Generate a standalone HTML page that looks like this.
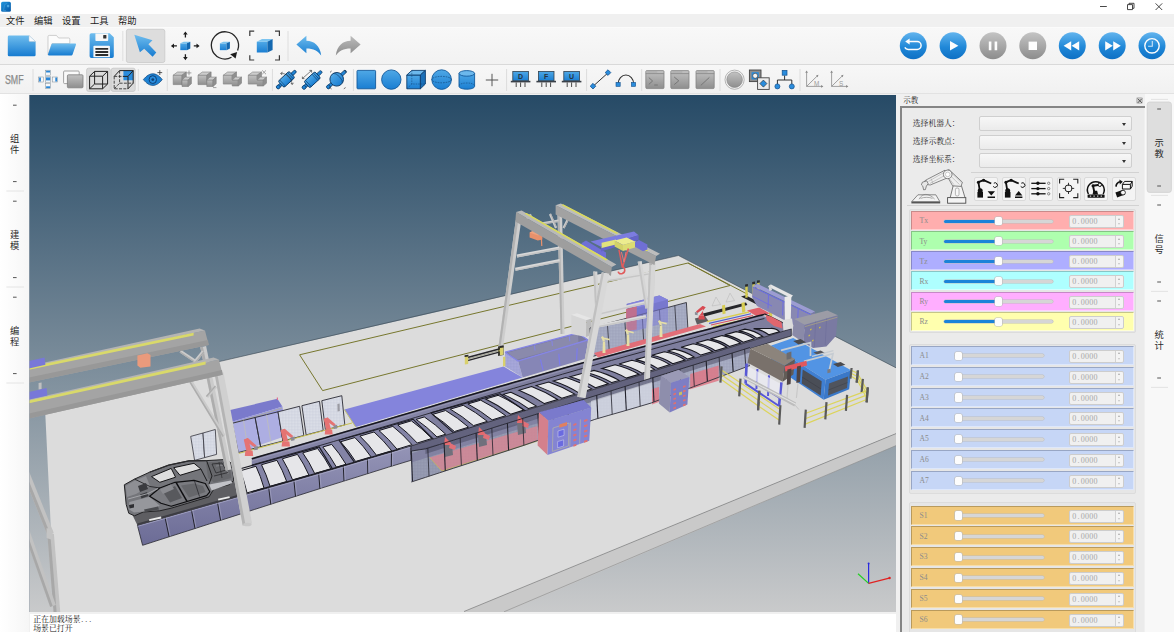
<!DOCTYPE html><html><head><meta charset="utf-8"><title>SMF</title><style>
*{box-sizing:border-box}
html,body{margin:0;padding:0}
body{width:1174px;height:632px;overflow:hidden;background:#f0f0f0;position:relative;font-family:"Liberation Sans",sans-serif;font-size:8px;color:#222}
.abs{position:absolute}
svg{position:absolute;left:0;top:0;overflow:visible}
#titlebar{left:0;top:0;width:1174px;height:14px;background:#fff}
#menubar{left:0;top:14px;width:1174px;height:13px;background:#f0f0f0}
#tb1{left:0;top:27px;width:1174px;height:38px;background:linear-gradient(#f8f8f8,#f2f2f2);border-top:1px solid #fbfbfb;border-bottom:1px solid #d9d9d9}
#tb2{left:0;top:65px;width:1174px;height:29px;background:linear-gradient(#f7f7f7,#f1f1f1);border-bottom:1px solid #e2e2e2}
#leftcol{left:0;top:94px;width:29px;height:538px;background:linear-gradient(90deg,#ffffff,#f6f6f6)}
#rightcol{left:1145px;top:94px;width:29px;height:538px;background:#f8f8f8}
#viewport{left:29px;top:95px;width:867px;height:517px;background:#7b8b98;overflow:hidden}
#log{left:30px;top:614px;width:866px;height:18px;background:#fff}
#panel{left:900px;top:94px;width:244px;height:538px;background:#ebebeb}
.sel{background:#dcdcdc;border:1px solid #c4c4c4;border-radius:2px}
.sep{width:1px;background:#d8d8d8}
.combo{left:979px;width:153px;height:15px;border:1px solid #cfcfcf;border-radius:2px;background:linear-gradient(#f7f7f7,#ebebeb)}
.combo:after{content:"";position:absolute;right:5px;top:6px;border:2px solid transparent;border-top:3px solid #333;border-bottom:0}
.btn{top:177px;width:24px;height:24px;border:1px solid #dadada;border-radius:2px;background:#f4f4f4}
.row{left:911px;width:223px;height:19px;border:1px solid;}
.lab{position:absolute;left:7.4px;top:5.4px;font-family:"Liberation Serif",serif;font-size:7.6px;line-height:8px;color:#8c8c8c;letter-spacing:.1px}
.trk{position:absolute;left:32px;top:7.5px;width:109px;height:3px;border-radius:1.5px;background:#d6d6d6;box-shadow:0 0 0 .5px #bdbdbd}
.fill{position:absolute;left:0;top:0;height:3px;width:54px;border-radius:1.5px;background:#1b83d9}
.knob{position:absolute;top:-2.7px;width:7.4px;height:8.2px;border-radius:1.5px;background:#fdfdfd;box-shadow:0 0 0 .6px #bcbcbc}
.spin{position:absolute;left:157px;top:3px;width:55px;height:13px;border:1px solid #cdcdcd;border-radius:2px;background:#f0f0f0;font-family:"Liberation Serif",serif;font-size:8px;line-height:11px;color:#a6a6a6;padding-left:2.2px;letter-spacing:.2px}
.spin b{font-weight:normal;padding:0 1.1px}
.spin i{position:absolute;right:0;top:0;width:8px;height:11px;border-left:1px solid #d2d2d2;background:#f4f4f4;border-radius:0 2px 2px 0}
.spin i:before{content:"";position:absolute;left:1.6px;top:1.6px;border:1.9px solid transparent;border-top:0;border-bottom:2.4px solid #a9a9a9}
.spin i:after{content:"";position:absolute;left:1.6px;top:7px;border:1.9px solid transparent;border-bottom:0;border-top:2.4px solid #c4c4c4}
.dash{position:absolute;width:4px;height:1px;background:#444}
.tsep{position:absolute;height:1px;background:#e6e6e6}
</style></head><body>
<div id="titlebar" class="abs"></div><div id="menubar" class="abs"></div><div id="tb1" class="abs"></div><div id="tb2" class="abs"></div>
<div id="leftcol" class="abs"></div><div id="rightcol" class="abs"></div>
<div id="viewport" class="abs"><svg width="867" height="517" viewBox="29 95 867 517"><defs><linearGradient id="sky" x1="0" y1="0" x2="0" y2="1"><stop offset="0" stop-color="#264a66"/><stop offset="1" stop-color="#c9cacb"/></linearGradient><linearGradient id="pan" x1="0" y1="0" x2="0" y2="1"><stop offset="0" stop-color="#9494b6"/><stop offset="1" stop-color="#6c6c96"/></linearGradient><linearGradient id="legg" x1="0" y1="0" x2="1" y2="0"><stop offset="0" stop-color="#c2c2c2"/><stop offset=".5" stop-color="#e2e2e2"/><stop offset="1" stop-color="#b0b0b0"/></linearGradient><pattern id="mesh" width="1.5" height="1.5" patternUnits="userSpaceOnUse"><rect width="1.5" height="1.5" fill="#dcdfe8"/><path d="M0 0h1.5M0 0v1.5" stroke="#bcc0d0" stroke-width=".3"/></pattern><pattern id="meshp" width="1.5" height="1.5" patternUnits="userSpaceOnUse"><rect width="1.5" height="1.5" fill="#a9a9dc"/><path d="M0 0h1.5M0 0v1.5" stroke="#8f94c4" stroke-width=".35"/></pattern><pattern id="meshr" width="1.5" height="1.5" patternUnits="userSpaceOnUse"><rect width="1.5" height="1.5" fill="#e29aa4"/><path d="M0 0h1.5M0 0v1.5" stroke="#b98a9c" stroke-width=".35"/></pattern><pattern id="meshd" width="1.5" height="1.5" patternUnits="userSpaceOnUse"><rect width="1.5" height="1.5" fill="#aab0c6"/><path d="M0 0h1.5M0 0v1.5" stroke="#8d93ac" stroke-width=".35"/></pattern></defs><rect x="29" y="94" width="867" height="518" fill="url(#sky)"/><polygon points="44.7,401.9 220.4,361.3 440,311.2 678.4,255.5 896,368 896.5,433.4 464,611.5 464,613 55,613" fill="#dcdcdc"/><polyline points="44.7,401.9 678.4,255.5 897,368.3" fill="none" stroke="#3a4650" stroke-width="0.7" opacity=".8"/><polygon points="896.5,433.4 464,611.5 464,613 504,613 896.5,445.4" fill="#c9c9c9"/><polyline points="896.5,433.4 464,611.5" fill="none" stroke="#6e6e6e" stroke-width="0.6"/><polyline points="896.5,445.4 504,611.8" fill="none" stroke="#8a8a8a" stroke-width="0.6"/><polyline points="299.6,354.8 322.6,390.6 730,285.5 688,263 299.6,354.8" fill="none" stroke="#77772e" stroke-width="1"/><polyline points="688,263 748,294.5" fill="none" stroke="#77772e" stroke-width="1"/><polygon points="557.5,214.1 562.1,213.9 564.6,334 560.6,334" fill="#cdcdcd"/><polygon points="557.5,214.1 559.6,214 562.4,334 560.6,334" fill="#b2b2b2"/><polygon points="649.4,262.9 655.4,263.1 649,398.1 643.4,397.9" fill="#cdcdcd"/><polygon points="649.4,262.9 652.1,263 645.9,398 643.4,397.9" fill="#b2b2b2"/><polygon points="542.4,224.6 542,222.2 558.4,219.6 558.8,222" fill="#cdcdcd"/><polygon points="542.4,224.6 542.2,223.5 558.6,220.9 558.8,222" fill="#b2b2b2"/><polygon points="517.2,257.4 516.6,254.4 559.1,246.5 559.7,249.5" fill="#d8d8d8"/><polygon points="517.2,257.4 516.9,256 559.4,248.1 559.7,249.5" fill="#c4c4c4"/><polygon points="515.6,270.8 515,267.8 559.5,259.1 560.1,262.1" fill="#d8d8d8"/><polygon points="515.6,270.8 515.3,269.4 559.8,260.7 560.1,262.1" fill="#c4c4c4"/><polygon points="521.8,224.8 520.2,223.2 530.2,213.7 531.8,215.3" fill="#cdcdcd"/><polygon points="521.8,224.8 521.1,224.1 531.1,214.6 531.8,215.3" fill="#b2b2b2"/><polygon points="564.5,228.5 562.5,227.5 569.5,213.5 571.5,214.5" fill="#cdcdcd"/><polygon points="564.5,228.5 563.6,228 570.6,214 571.5,214.5" fill="#b2b2b2"/><polygon points="557,227.6 555,228.4 549,214.4 551,213.6" fill="#cdcdcd"/><polygon points="557,227.6 556.1,228 550.1,214 551,213.6" fill="#b2b2b2"/><polygon points="515.7,220.6 521.1,221.4 502.9,348.3 498.3,347.7" fill="#cdcdcd"/><polygon points="515.7,220.6 518.1,221 500.4,348 498.3,347.7" fill="#b2b2b2"/><polygon points="498,346.5 503.6,345.5 503.6,355 498,356" fill="#3c3c34"/><polygon points="498.6,348.5 503,347.8 503,352 498.6,352.8" fill="#d8c83a"/><polygon points="555.6,205.3 656.1,255.9 654.5,265 555.6,214.4" fill="#a2a2a2"/><polygon points="555.6,205.3 560.8,203.6 660,253.8 656.1,255.9" fill="#bdbdbd"/><polygon points="561.2,205 563.2,204.3 618.5,233 616.5,234" fill="#d9d95e"/><polygon points="637,246 639,245.2 648.4,250.2 646.6,251.2" fill="#d9d95e"/><polygon points="581.7,243 586,240.4 606,252.6 606,258.2 601.5,259.4 581.7,247.6" fill="#6f6fd6"/><polygon points="590.6,241.4 634,231.6 638.6,235.2 601,246.8" fill="#7c7ce0"/><polygon points="601,246.8 638.6,235.2 638.6,240 601,251.6" fill="#6464c8"/><polygon points="634.5,242.6 639,240 647.4,244.6 647.4,249.6 643,251.2 634.5,246.6" fill="#6f6fd6"/><polygon points="601.6,242.8 616,239.4 616,244.6 601.6,248" fill="#e2e27c"/><polygon points="614.6,240.6 626.6,237.6 635,241.6 623,245" fill="#ecec8e"/><polygon points="614.6,240.6 623,245 623,251 614.6,246.4" fill="#d2d268"/><polygon points="623,245 635,241.6 635,247.4 623,251" fill="#dcdc72"/><polyline points="619,249.8 622.4,267.5 628.4,248.6" fill="none" stroke="#e05c5c" stroke-width="1.5"/><polyline points="621.4,252 624,262 626,252" fill="none" stroke="#e47878" stroke-width="1"/><path d="M623 266.500c2.400 2 2.600 6-.800 7.100-2 .500-3.600-.400-4-2" fill="none" stroke="#e05c5c" stroke-width="1.600"/><polygon points="529.6,232.4 534,230.6 542.4,233.6 542.4,239.4 537.8,240.6 529.6,237.6" fill="#e8916c"/><polygon points="529.6,232.4 534,230.6 542.4,233.6 538,235.4" fill="#f0a27e"/><polyline points="541.4,239 541.8,246" fill="none" stroke="#e8916c" stroke-width="1.2"/><polygon points="516.1,212.1 611.8,267 611,276 515.3,221.6" fill="#9e9e9e"/><polygon points="516.1,212.1 521.6,210.4 616.4,264.4 611.8,267" fill="#b9b9b9"/><polygon points="524.4,213.6 526.6,212.9 607.8,259.4 605.6,260.4" fill="#d9d95e"/><polygon points="190.7,436.4 203,433 204.6,457.6 194.6,460.4" fill="url(#mesh)" stroke="#33333c" stroke-width="0.8" stroke-linejoin="round"/><polygon points="203,433 215.3,429.5 216.6,454.4 204.6,457.6" fill="url(#mesh)" stroke="#33333c" stroke-width="0.8" stroke-linejoin="round"/><polygon points="229.1,410.3 277.4,398.8 282.4,406.5 232.1,421.8" fill="#7a7acc"/><polygon points="232.1,421.8 282.4,406.5 287.3,435.6 238.3,452.5" fill="#9a9ade"/><polygon points="229.1,410.3 232.1,421.8 238.3,452.5 233,441" fill="#c8a4c8"/><polyline points="232.4,423.4 282,408.2" fill="none" stroke="#b8b880" stroke-width="0.6"/><polyline points="277.4,397.6 277.4,400" fill="none" stroke="#e07090" stroke-width="1.2"/><polyline points="229.4,409 229.4,411.4" fill="none" stroke="#e07090" stroke-width="1.2"/><polygon points="232.1,423.3 255.1,417.5 260.6,446.7 238.3,452.5" fill="#dfe2ec" stroke="#2a2a34" stroke-width="0.9" stroke-linejoin="round" fill-opacity=".28"/><polygon points="255.1,417.5 278,411.8 282.9,441 260.6,446.7" fill="#dfe2ec" stroke="#2a2a34" stroke-width="0.9" stroke-linejoin="round" fill-opacity=".28"/><polygon points="278,411.8 299.6,406.3 303.8,435.5 282.9,441" fill="url(#mesh)" stroke="#2a2a34" stroke-width="0.9" stroke-linejoin="round"/><polygon points="301.9,405.7 319.5,401.3 323.2,430.5 306.1,434.9" fill="url(#mesh)" stroke="#2a2a34" stroke-width="0.9" stroke-linejoin="round"/><polygon points="321.8,400.7 341.8,395.7 344.8,424.9 325.4,429.9" fill="url(#mesh)" stroke="#2a2a34" stroke-width="0.9" stroke-linejoin="round"/><polyline points="243.5,420.3 248,449.6" fill="none" stroke="#c8c8a0" stroke-width="0.5"/><polyline points="266.5,414.6 271,443" fill="none" stroke="#c8c8a0" stroke-width="0.5"/><polygon points="337.4,404 339.6,403.4 339.8,411 337.6,411.6" fill="#9a9aa2"/><polyline points="238.3,453.5 300,437" fill="none" stroke="#c8c050" stroke-width="1"/><polyline points="300,437 352,423" fill="none" stroke="#c8c050" stroke-width="1"/><polygon points="244.8,456 253.2,456 252.6,450.8 245.4,450.8" fill="#e57373"/><polygon points="246.3,450.8 251.5,450.8 247.9,438.1 243.8,439.7" fill="#e57373"/><polygon points="243.8,439.7 247.9,438.1 256.4,445.5 254.7,447.6" fill="#e57373"/><polygon points="254.2,446.6 257.8,445.9 257.8,449.7 254.2,450.3" fill="#8c8c96"/><polygon points="281.6,446.6 290,446.6 289.4,441.4 282.2,441.4" fill="#e57373"/><polygon points="283.1,441.4 288.3,441.4 284.8,428.8 280.6,430.3" fill="#e57373"/><polygon points="280.6,430.3 284.8,428.8 293.2,436.1 291.5,438.2" fill="#e57373"/><polygon points="291.1,437.2 294.6,436.5 294.6,440.3 291.1,440.9" fill="#8c8c96"/><polygon points="324.7,434.4 332.7,434.4 332.1,429.4 325.3,429.4" fill="#e57373"/><polygon points="326.1,429.4 331.1,429.4 327.7,417.4 323.7,418.9" fill="#e57373"/><polygon points="323.7,418.9 327.7,417.4 335.7,424.4 334.1,426.4" fill="#e57373"/><polygon points="333.7,425.4 337.1,424.8 337.1,428.4 333.7,429" fill="#8c8c96"/><polygon points="344.4,409.6 503.5,366.6 522.6,377.5 355.7,427" fill="#8484dc"/><polyline points="344.4,409.6 355.7,427" fill="none" stroke="#c0c070" stroke-width="1"/><polygon points="505.1,352.2 518.1,361.1 522.7,377.5 504.3,366" fill="url(#meshp)"/><polygon points="518.1,361.1 587.9,339.9 586.4,358.4 522.7,377.5" fill="#8686b6"/><polygon points="505.1,352.2 577.9,333 587.9,339.9 518.1,361.1" fill="#7b7b9d"/><polygon points="507.5,352.6 577.9,334 578.5,343 516.5,359.8" fill="#8a8aac"/><polyline points="505.1,352.2 577.9,333 587.9,339.9 518.1,361.1 505.1,352.2" fill="none" stroke="#8585e6" stroke-width="1.3"/><polyline points="540.4,359.3 543.1,370.4" fill="none" stroke="#7c7cea" stroke-width="1.2"/><polyline points="558.8,353.7 559.8,365.4" fill="none" stroke="#7c7cea" stroke-width="1.2"/><polyline points="577.2,348.1 576.6,360.3" fill="none" stroke="#7c7cea" stroke-width="1.2"/><polyline points="534.5,345.5 535,350.5" fill="none" stroke="#8585e6" stroke-width="1"/><polyline points="551.9,340.9 552.4,345.9" fill="none" stroke="#8585e6" stroke-width="1"/><polyline points="569.3,336.3 569.8,341.3" fill="none" stroke="#8585e6" stroke-width="1"/><polygon points="571.4,314.8 586.2,320 586,337 571.4,334" fill="#d6d6d6"/><polygon points="586.2,320 591.6,318.4 591.4,335 586,337" fill="#bdbdbd"/><polygon points="571.4,314.8 577,313.2 591.6,318.4 586.2,320" fill="#e6e6e6"/><polyline points="467.5,357.5 501,348.6" fill="none" stroke="#26262a" stroke-width="1.6"/><polyline points="467.5,360.6 501,351.6" fill="none" stroke="#26262a" stroke-width="1.4"/><polyline points="467.5,359 501,350.2" fill="none" stroke="#77775a" stroke-width="0.6"/><polygon points="464.8,356 468.2,355.5 468.2,364 464.8,364.5" fill="#d9d06c"/><polygon points="464.6,355.2 468.4,354.7 468.4,356.6 464.6,357.1" fill="#2a2a2a"/><polygon points="500,346.8 503.4,346.3 503.4,354.8 500,355.3" fill="#d9d06c"/><polygon points="499.8,346 503.6,345.5 503.6,347.4 499.8,347.9" fill="#2a2a2a"/><polygon points="503,357 505.4,356.4 505.4,366 503,366.6" fill="#d9d06c"/><polygon points="626.6,304 659.4,295.4 668,299.7 668,322 635,331 626.6,327" fill="#7070c0"/><polygon points="626.6,304 659.4,295.4 668,299.7 635,308.6" fill="#8484dc"/><polygon points="626.2,309 636.7,306.4 636.7,329.6 626.2,331.3" fill="#d46a78" opacity="0.85"/><polygon points="590,328 686.4,302.5 688,330.5 592,356.6" fill="url(#meshd)" stroke="#22222a" stroke-width="0.8" stroke-linejoin="round"/><polyline points="607.4,323.4 609.3,351.9" fill="none" stroke="#30303a" stroke-width="0.8"/><polyline points="624.7,318.8 626.6,347.2" fill="none" stroke="#30303a" stroke-width="0.8"/><polyline points="642.1,314.2 643.8,342.5" fill="none" stroke="#30303a" stroke-width="0.8"/><polyline points="659.4,309.6 661.1,337.8" fill="none" stroke="#30303a" stroke-width="0.8"/><polyline points="674.8,305.6 676.5,333.6" fill="none" stroke="#30303a" stroke-width="0.8"/><polygon points="626.6,310 668,299.7 668,322 628,333" fill="#8080d8" opacity="0.55"/><polygon points="626.2,309 636.7,306.4 636.7,329.6 626.2,331.3" fill="#d46a78" opacity="0.6"/><polygon points="594,353 700,324 706,326.6 598,357.4" fill="#e26e78"/><polygon points="602.5,353 605.5,353 605.1,341.6 602.9,341.6" fill="#e6dfa6"/><polygon points="602.9,341.6 601.1,336.9 603,335.9 605.1,340.6" fill="#e6dfa6"/><polygon points="601.1,336.9 609.7,338.8 609.7,340.6 602.1,338.8" fill="#e6dfa6"/><polygon points="626.5,346 629.5,346 629.1,334.6 626.9,334.6" fill="#e6dfa6"/><polygon points="626.9,334.6 625.1,329.9 627,328.9 629.1,333.6" fill="#e6dfa6"/><polygon points="625.1,329.9 633.7,331.8 633.7,333.6 626.1,331.8" fill="#e6dfa6"/><polygon points="659.5,337 662.5,337 662.1,325.6 659.9,325.6" fill="#e6dfa6"/><polygon points="659.9,325.6 658.1,320.9 660,319.9 662.1,324.6" fill="#e6dfa6"/><polygon points="658.1,320.9 666.7,322.8 666.7,324.6 659.1,322.8" fill="#e6dfa6"/><polygon points="694.8,318.6 705,316 708.5,321 697,324.6" fill="#5c5c60"/><polygon points="698.4,319.6 704.8,319.6 704.3,315.6 698.9,315.6" fill="#d84a52"/><polygon points="699.5,315.6 703.5,315.6 702.4,306 705.6,307.2" fill="#d84a52"/><polygon points="705.6,307.2 702.4,306 696,311.6 697.3,313.2" fill="#d84a52"/><polygon points="697.6,312.4 694.9,311.9 694.9,314.8 697.6,315.3" fill="#8c8c96"/><polyline points="712,306 716,297 720.6,304.6 712,306" fill="none" stroke="#b4b4b4" stroke-width="0.5"/><polyline points="726,302.1 730,293.1 734.6,300.7 726,302.1" fill="none" stroke="#b4b4b4" stroke-width="0.5"/><polygon points="703,313.6 746,302.6 747.4,305 704.4,316.4" fill="#26262a"/><polygon points="741,296.4 745.6,295.2 774,309.6 770,311.4" fill="#26262a"/><polygon points="745.3,286.4 747.7,286 747.7,297.4 745.3,297.8" fill="#d6cc52"/><polygon points="745.1,284.4 747.9,284 747.9,286.4 745.1,286.8" fill="#2a2a2a"/><polygon points="752.4,284 754.8,283.6 754.8,295 752.4,295.4" fill="#d6cc52"/><polygon points="752.2,282 755,281.6 755,284 752.2,284.4" fill="#2a2a2a"/><polygon points="757.2,282.6 759.6,282.2 759.6,293.6 757.2,294" fill="#d6cc52"/><polygon points="757,280.6 759.8,280.2 759.8,282.6 757,283" fill="#2a2a2a"/><polygon points="741.4,303 744.6,302 745.4,311.4 742.2,312.4" fill="#d6cc52"/><polygon points="768.6,309.6 771.8,308.6 772.4,316.4 769.4,317.4" fill="#d6cc52"/><polygon points="722,305.6 725,304.8 725.6,313.4 722.6,314.2" fill="#d6cc52"/><polyline points="707,321.6 749,312" fill="none" stroke="#d8cc50" stroke-width="1.3"/><polyline points="709,323.4 751,313.8" fill="none" stroke="#5060d0" stroke-width="1.1"/><polyline points="711,325 753,315.5" fill="none" stroke="#d85060" stroke-width="1.1"/><polyline points="713,326.6 755,317.2" fill="none" stroke="#d8cc50" stroke-width="1.1"/><polygon points="747,310.4 759.2,307.6 770,313.4 757,316.6" fill="#e0606a"/><polygon points="752.8,287 811,314.7 810,331 797.5,327 757,306 752,297" fill="#8888b2"/><polygon points="752.8,285.9 757.5,283.8 815,311.5 811,313.7" fill="#9c9cd2"/><polygon points="811,313.7 815,311.5 814,327.5 810,331" fill="#7a7aa6"/><polyline points="752.8,287 811,314.7" fill="none" stroke="#6a6ae8" stroke-width="1"/><polyline points="768.5,294.5 768,308.5" fill="none" stroke="#6a6ae8" stroke-width="0.9"/><polyline points="783.1,301.4 782.6,315.4" fill="none" stroke="#6a6ae8" stroke-width="0.9"/><polyline points="798.2,308.6 797.7,322.6" fill="none" stroke="#6a6ae8" stroke-width="0.9"/><polyline points="753,296.5 772,306" fill="none" stroke="#6a6ae8" stroke-width="0.8"/><polygon points="251.8,458.2 268.2,453.5 284.5,448.8 300.9,444.1 317.2,439.4 333.6,434.6 349.9,429.8 366.3,425.1 382.6,420.3 399,415.5 415.3,410.7 431.7,405.8 448,401 464.4,396.1 480.7,391.3 497,386.6 513.4,382 529.7,377.3 546.1,372.7 562.4,368 578.8,363.3 595.1,358.9 611.5,354.6 627.8,350.2 644.2,345.8 660.5,341.4 676.9,337 693.2,332.6 709.6,328.3 725.9,323.9 742.3,319.6 758.6,315.2 775,319 791.3,326.9 791.3,328.8 775,333.8 758.6,338.8 742.3,343.8 725.9,348.7 709.6,353.7 693.2,358.7 676.9,363.8 660.5,368.8 644.2,373.9 627.8,378.9 611.5,384 595.1,389 578.8,394.1 562.4,399.1 546.1,404.2 529.7,409.2 513.4,414.3 497,419.4 480.7,424.4 464.4,429.5 448,434.5 431.7,439.6 415.3,444.6 399,449.7 382.6,454.5 366.3,459.3 349.9,464.2 333.6,469 317.2,473.8 300.9,478.5 284.5,483.2 268.2,487.8 251.8,492.5" fill="#8484a6"/><polygon points="431.7,405.8 448,401 464.4,396.1 480.7,391.3 497,386.6 513.4,382 529.7,377.3 546.1,372.7 562.4,368 578.8,363.3 595.1,358.9 611.5,354.6 627.8,350.2 644.2,345.8 660.5,341.4 676.9,337 693.2,332.6 709.6,328.3 725.9,323.9 742.3,319.6 758.6,315.2 775,319 791.3,326.9 791.3,328.8 775,333.8 758.6,338.8 742.3,343.8 725.9,348.7 709.6,353.7 693.2,358.7 676.9,363.8 660.5,368.8 644.2,373.9 627.8,378.9 611.5,384 595.1,389 578.8,394.1 562.4,399.1 546.1,404.2 529.7,409.2 513.4,414.3 497,419.4 480.7,424.4 464.4,429.5 448,434.5 431.7,439.6" fill="#55556e" opacity="0.12"/><polyline points="251.8,458.8 268.2,454.1 284.5,449.4 300.9,444.7 317.2,440 333.6,435.2 349.9,430.4 366.3,425.7 382.6,420.9 399,416.1 415.3,411.3 431.7,406.4 448,401.6 464.4,396.7 480.7,391.9 497,387.2 513.4,382.6 529.7,377.9 546.1,373.3 562.4,368.6 578.8,363.9 595.1,359.5 611.5,355.2 627.8,350.8 644.2,346.4 660.5,342 676.9,337.6 693.2,333.2 709.6,328.9 725.9,324.5 742.3,320.2 758.6,315.8 764.4,314.5" fill="none" stroke="#17171f" stroke-width="1.6"/><polyline points="251.8,460.8 268.2,456.1 284.5,451.4 300.9,446.7 317.2,442 333.6,437.2 349.9,432.4 366.3,427.7 382.6,422.9 399,418.1 415.3,413.3 431.7,408.4 448,403.6 464.4,398.7 480.7,393.9 497,389.2 513.4,384.6 529.7,379.9 546.1,375.3 562.4,370.6 578.8,365.9 595.1,361.5 611.5,357.2 627.8,352.8 644.2,348.4 660.5,344 676.9,339.6 693.2,335.2 709.6,330.9 725.9,326.5 742.3,322.2 758.6,317.8 764.4,316.5" fill="none" stroke="#9a9ab8" stroke-width="0.8"/><polyline points="251.8,465 268.2,460.4 284.5,455.7 300.9,451 317.2,446.3 333.6,441.5 349.9,436.7 366.3,431.9 382.6,427.1 399,422.3 415.3,417.5 431.7,412.6 448,407.7 464.4,402.8 480.7,397.9 497,393.2 513.4,388.4 529.7,383.7 546.1,379 562.4,374.2 578.8,369.5 595.1,365 611.5,360.4 627.8,355.9 644.2,351.4 660.5,346.9 676.9,342.4 693.2,337.9 709.6,333.4 725.9,328.9 742.3,324.4 758.6,319.9 764.4,318.5" fill="none" stroke="#22222c" stroke-width="0.9"/><polyline points="764.4,313.7 792,327.2" fill="none" stroke="#17171f" stroke-width="1.2"/><path d="M247 492.878L264.02 488.003Q260.596 475.949 255.973 466.294L240.249 470.786Q244.224 480.632 247 492.878z" fill="#e6e6e9" stroke="#17171f" stroke-width="1"/><path d="M270 486.291L286.697 481.509Q282.41 469.708 276.924 460.308L261.498 464.715Q266.349 474.303 270 486.291z" fill="#e6e6e9" stroke="#17171f" stroke-width="1"/><path d="M292.563 479.828L308.942 475.136Q303.801 463.568 297.46 454.401L282.344 458.759Q288.054 468.094 292.563 479.828z" fill="#e6e6e9" stroke="#17171f" stroke-width="1"/><path d="M314.697 473.486L330.765 468.787Q324.787 457.454 317.609 448.521L302.765 452.86Q309.331 461.973 314.697 473.486z" fill="#e6e6e9" stroke="#17171f" stroke-width="1"/><polygon points="238.6,469.2 319.2,446.9 333.4,470.4 246.4,494.5" fill="none" stroke="#1b1b24" stroke-width="1.1" stroke-linejoin="round"/><path d="M336.411 467.12L345.997 464.289Q339.448 453.139 331.699 444.39L322.831 446.99Q330.221 455.855 336.411 467.12z" fill="#e6e6e9" stroke="#17171f" stroke-width="1"/><path d="M355.582 461.458L371.075 456.882Q363.591 446.034 354.907 437.586L340.568 441.79Q348.675 450.424 355.582 461.458z" fill="#e6e6e9" stroke="#17171f" stroke-width="1"/><path d="M376.519 455.274L391.718 450.785Q383.467 440.184 374.016 431.984L359.945 436.109Q368.832 444.491 376.519 455.274z" fill="#e6e6e9" stroke="#17171f" stroke-width="1"/><path d="M397.058 449.208L411.968 444.633Q403.004 434.307 392.839 426.381L378.961 430.534Q388.61 438.671 397.058 449.208z" fill="#e6e6e9" stroke="#17171f" stroke-width="1"/><path d="M417.207 443.015L431.834 438.499Q422.197 428.458 411.361 420.817L397.721 424.915Q408.064 432.765 417.207 443.015z" fill="#e6e6e9" stroke="#17171f" stroke-width="1"/><polygon points="339,440.2 413,419.2 434.4,440.1 355,463.1" fill="none" stroke="#1b1b24" stroke-width="1.1" stroke-linejoin="round"/><path d="M436.973 436.912L445.699 434.218Q435.6 424.374 424.301 416.929L416.156 419.376Q427.165 426.944 436.973 436.912z" fill="#e6e6e9" stroke="#17171f" stroke-width="1"/><path d="M454.425 431.524L468.528 427.169Q457.68 417.645 445.633 410.521L432.451 414.481Q444.038 421.802 454.425 431.524z" fill="#e6e6e9" stroke="#17171f" stroke-width="1"/><path d="M473.484 425.639L487.319 421.37Q475.896 412.126 463.273 405.282L450.267 409.129Q462.475 416.184 473.484 425.639z" fill="#e6e6e9" stroke="#17171f" stroke-width="1"/><path d="M492.18 419.871L505.753 415.684Q493.828 406.742 480.702 400.2L467.866 403.943Q480.623 410.707 492.18 419.871z" fill="#e6e6e9" stroke="#17171f" stroke-width="1"/><path d="M510.522 414.176L523.921 410.044Q511.726 401.452 498.285 395.354L485.576 399.063Q498.673 405.373 510.522 414.176z" fill="#e6e6e9" stroke="#17171f" stroke-width="1.00585"/><polygon points="430.9,412.9 499.9,393.8 526.5,411.6 453.8,433.1" fill="none" stroke="#1b1b24" stroke-width="1.1" stroke-linejoin="round"/><path d="M528.515 408.563L536.458 406.114Q524.312 397.814 510.84 392.168L503.283 394.376Q516.563 400.143 528.515 408.563z" fill="#e6e6e9" stroke="#17171f" stroke-width="1.01584"/><path d="M544.401 403.609L557.582 399.545Q545.269 391.64 531.56 386.529L518.982 390.208Q532.39 395.511 544.401 403.609z" fill="#e6e6e9" stroke="#17171f" stroke-width="1.02467"/><path d="M561.75 398.2L574.812 394.173Q562.491 386.594 548.695 381.964L536.194 385.625Q549.709 390.438 561.75 398.2z" fill="#e6e6e9" stroke="#17171f" stroke-width="1.03431"/><path d="M578.77 392.895L591.71 388.915Q579.497 381.676 565.733 377.538L553.145 381.098Q566.732 385.447 578.77 392.895z" fill="#e6e6e9" stroke="#17171f" stroke-width="1.04376"/><path d="M595.467 387.704L608.282 383.763Q596.244 376.856 582.582 373.197L570.055 376.734Q583.573 380.594 595.467 387.704z" fill="#e6e6e9" stroke="#17171f" stroke-width="1.05304"/><path d="M611.846 382.614L619.076 380.391Q607.383 373.681 593.992 370.366L586.724 372.424Q600.133 375.822 611.846 382.614z" fill="#e6e6e9" stroke="#17171f" stroke-width="1.06214"/><path d="M626.307 378.122L638.88 374.258Q627.849 367.735 615.056 364.736L602.049 368.427Q615.058 371.513 626.307 378.122z" fill="#e6e6e9" stroke="#17171f" stroke-width="1.07017"/><path d="M642.1 373.219L654.543 369.395Q644.116 363.03 631.857 360.328L618.996 363.985Q631.464 366.77 642.1 373.219z" fill="#e6e6e9" stroke="#17171f" stroke-width="1.07894"/><path d="M657.593 368.411L669.905 364.629Q660.057 358.413 648.308 355.997L635.594 359.618Q647.544 362.114 657.593 368.411z" fill="#e6e6e9" stroke="#17171f" stroke-width="1.08755"/><path d="M672.792 363.696L684.97 359.956Q675.677 353.881 664.417 351.741L651.85 355.327Q663.305 357.543 672.792 363.696z" fill="#e6e6e9" stroke="#17171f" stroke-width="1.096"/><path d="M687.702 359.096L694.284 357.092Q685.281 351.094 674.277 349.096L667.495 351.02Q678.598 353.058 687.702 359.096z" fill="#e6e6e9" stroke="#17171f" stroke-width="1.1"/><path d="M700.866 355.097L712.655 351.524Q703.926 345.636 693.197 343.747L681.056 347.18Q691.961 349.138 700.866 355.097z" fill="#e6e6e9" stroke="#17171f" stroke-width="1.1"/><path d="M715.242 350.739L726.807 347.234Q718.29 341.431 707.773 339.627L695.862 342.994Q706.552 344.867 715.242 350.739z" fill="#e6e6e9" stroke="#17171f" stroke-width="1.1"/><path d="M729.346 346.465L740.691 343.026Q732.381 337.306 722.072 335.585L710.387 338.888Q720.867 340.676 729.346 346.465z" fill="#e6e6e9" stroke="#17171f" stroke-width="1.1"/><path d="M743.181 342.271L754.311 338.898Q746.205 333.259 736.099 331.62L724.637 334.86Q734.909 336.566 743.181 342.271z" fill="#e6e6e9" stroke="#17171f" stroke-width="1.1"/><path d="M756.754 338.158L762.745 336.342Q754.766 330.753 744.786 329.164L738.615 330.908Q748.684 332.533 756.754 338.158z" fill="#e6e6e9" stroke="#17171f" stroke-width="1.1"/><path d="M768.737 334.698L779.468 331.847Q776.15 328.121 770.832 328.396L753.602 328.649Q762.169 329.673 768.737 334.698z" fill="#e6e6e9" stroke="#17171f" stroke-width="1.1"/><polygon points="137.4,525.3 160.2,518.8 183,512.2 205.8,505.7 228.6,499.2 251.4,492.6 274.2,486.1 297,479.6 319.8,473.1 342.6,466.3 365.4,459.6 388.2,452.9 411,446 411,460.3 388.6,467.1 366.3,474.1 343.9,481.1 321.5,488.1 299.2,495.2 276.8,502.3 254.4,509.5 232.1,516.7 209.7,523.8 187.3,531 165,538.1 142.6,545.3" fill="url(#pan)" stroke="#26262e" stroke-width="0.8" stroke-linejoin="round"/><polyline points="165,517.4 169.1,536.8" fill="none" stroke="#23232c" stroke-width="1"/><polyline points="166.2,517.1 170.3,536.4" fill="none" stroke="#b0b0cc" stroke-width="0.5"/><polyline points="191.4,509.8 195,528.5" fill="none" stroke="#23232c" stroke-width="1"/><polyline points="192.6,509.5 196.2,528.2" fill="none" stroke="#b0b0cc" stroke-width="0.5"/><polyline points="217.5,502.4 220.6,520.3" fill="none" stroke="#23232c" stroke-width="1"/><polyline points="218.7,502 221.8,520" fill="none" stroke="#b0b0cc" stroke-width="0.5"/><polyline points="243.3,495 245.8,512.3" fill="none" stroke="#23232c" stroke-width="1"/><polyline points="244.5,494.6 247,511.9" fill="none" stroke="#b0b0cc" stroke-width="0.5"/><polyline points="268.7,487.7 270.8,504.3" fill="none" stroke="#23232c" stroke-width="1"/><polyline points="269.9,487.3 272,503.9" fill="none" stroke="#b0b0cc" stroke-width="0.5"/><polyline points="293.9,480.5 295.5,496.4" fill="none" stroke="#23232c" stroke-width="1"/><polyline points="295.1,480.1 296.7,496" fill="none" stroke="#b0b0cc" stroke-width="0.5"/><polyline points="318.7,473.4 319.9,488.6" fill="none" stroke="#23232c" stroke-width="1"/><polyline points="319.9,473 321.1,488.2" fill="none" stroke="#b0b0cc" stroke-width="0.5"/><polyline points="343.3,466.1 344,481" fill="none" stroke="#23232c" stroke-width="1"/><polyline points="344.5,465.8 345.2,480.7" fill="none" stroke="#b0b0cc" stroke-width="0.5"/><polyline points="367.5,459 367.8,473.6" fill="none" stroke="#23232c" stroke-width="1"/><polyline points="368.7,458.6 369,473.2" fill="none" stroke="#b0b0cc" stroke-width="0.5"/><polyline points="391.5,451.9 391.3,466.2" fill="none" stroke="#23232c" stroke-width="1"/><polyline points="392.7,451.5 392.5,465.9" fill="none" stroke="#b0b0cc" stroke-width="0.5"/><polyline points="137.4,526.4 160.2,519.9 183,513.3 205.8,506.8 228.6,500.3 251.4,493.7 274.2,487.2 297,480.7 319.8,474.2 342.6,467.4 365.4,460.7 388.2,454 411,447.1" fill="none" stroke="#b4b4d0" stroke-width="0.6"/><polyline points="251.8,491.9 268.2,487.2 284.5,482.6 300.9,477.9 317.2,473.2 333.6,468.4 349.9,463.6 366.3,458.7 382.6,453.9 399,449.1" fill="none" stroke="#1c1c24" stroke-width="1.2"/><polygon points="411,446 434.8,438.6 458.5,431.3 482.3,423.9 506.1,416.6 529.8,409.2 553.6,401.9 577.4,394.5 601.1,387.2 624.9,379.8 648.7,372.5 672.5,365.1 696.2,357.8 720,350.6 743.8,343.3 767.5,336.1 791.3,328.8 791.3,335.9 767.5,343.2 743.8,350.6 720,357.9 696.2,365.3 672.5,372.7 648.7,380.1 624.9,387.6 601.1,395 577.4,402.5 553.6,409.9 529.8,417.3 506.1,424.8 482.3,432.2 458.5,439.7 434.8,447.1 411,454.6" fill="#63637e" stroke="#1c1c24" stroke-width="0.7" stroke-linejoin="round"/><polygon points="600.7,314.4 600.1,311.4 647,300.5 647.6,303.5" fill="#dcdcdc"/><polygon points="600.7,314.4 600.4,313 647.3,302.1 647.6,303.5" fill="#c8c8c8"/><polygon points="598.2,327.5 597.6,324.5 645.7,314.9 646.3,317.9" fill="#dcdcdc"/><polygon points="598.2,327.5 597.9,326.1 646,316.5 646.3,317.9" fill="#c8c8c8"/><polygon points="593.3,271.6 597.3,271.4 599.9,323.4 595.9,323.6" fill="#d4d4d4"/><polygon points="593.3,271.6 595.1,271.5 597.7,323.5 595.9,323.6" fill="#c2c2c2"/><polygon points="601.8,272.3 609.2,273.7 585.5,398.3 577.3,396.7" fill="#d8d8d8"/><polygon points="601.8,272.3 604,272.7 579.8,397.2 577.3,396.7" fill="#c0c0c0"/><polygon points="608.2,281.5 607.8,278.5 650.8,271.3 651.2,274.3" fill="#dadada"/><polygon points="608.2,281.5 608,280.1 651,272.9 651.2,274.3" fill="#c6c6c6"/><polygon points="637.7,261.7 641.7,261.1 649.3,308 645.3,308.6" fill="#d6d6d6"/><polygon points="637.7,261.7 639.5,261.4 647.1,308.3 645.3,308.6" fill="#c4c4c4"/><polygon points="649.4,265.1 655.4,265.3 648.8,402.1 643.2,401.9" fill="#d6d6d6"/><polygon points="649.4,265.1 651.2,265.1 644.9,401.9 643.2,401.9" fill="#c2c2c2"/><polygon points="411.3,451 425.4,448.9 439.5,444.5 453.6,440.1 467.8,435.7 481.9,431.3 496,426.8 510.1,422.4 524.2,418 538.3,413.6 552.4,409.2 566.5,404.7 580.6,400.3 594.8,395.9 608.9,391.5 623,387.1 637.1,382.6 651.2,378.2 665.3,373.8 679.4,369.4 693.5,365 707.7,360.6 721.8,356.3 735.9,351.9 750,347.5 750,365.5 735.9,370.8 721.8,376.1 707.7,381.4 693.5,386.7 679.4,392.1 665.3,397.6 651.2,403 637.1,407.2 623,411.3 608.9,415.3 594.8,419.4 580.6,424.4 566.5,429.6 552.4,434.9 538.3,440.2 524.2,445.2 510.1,449.8 496,454.4 481.9,459 467.8,463.6 453.6,468.2 439.5,472.8 425.4,477.4 411.3,482" fill="url(#meshd)"/><polygon points="411.3,453.4 427.4,448.3 443.5,443.3 459.6,438.2 475.6,433.2 491.7,428.2 507.8,423.1 523.9,418.1 540,413.1 540,422.6 523.9,427.5 507.8,432.5 491.7,437.5 475.6,442.5 459.6,447.4 443.5,452.4 427.4,457.4 411.3,462.4" fill="#8a8aac" opacity="0.8"/><polygon points="425.4,448.9 439.5,444.5 453.6,440.1 467.8,435.7 481.9,431.3 496,426.8 510.1,422.4 524.2,418 538.3,413.6 552.4,409.2 566.5,404.7 580.6,400.3 594.8,395.9 608.9,391.5 623,387.1 637.1,382.6 651.2,378.2 665.3,373.8 679.4,369.4 693.5,365 707.7,360.6 721.8,356.3 735.9,351.9 750,347.5 750,352.5 735.9,356.9 721.8,361.3 707.7,365.6 693.5,370 679.4,374.4 665.3,378.8 651.2,383.2 637.1,387.6 623,392.1 608.9,396.5 594.8,400.9 580.6,405.3 566.5,409.7 552.4,414.2 538.3,418.6 524.2,423 510.1,427.4 496,431.8 481.9,436.3 467.8,440.7 453.6,445.1 439.5,449.5 425.4,453.9" fill="#4e4e66" opacity="0.55"/><polygon points="411.3,451 537.5,418.7 537.5,441.6 413,481.4" fill="#3c3c5a" opacity="0.16"/><polygon points="429.6,457.5 537.5,426 537.5,440.5 441.8,471" fill="#dc8490" opacity="0.75"/><polyline points="429.6,457.5 441.8,471 537.5,441" fill="none" stroke="#c0b860" stroke-width="0.8"/><polygon points="591,401.1 652,382 652,402.7 591,420.5" fill="#e4e7ee" opacity="0.62"/><polygon points="690.2,374 718.7,365.6 718.7,380.8 690.2,389.3" fill="#de7886" opacity="0.85"/><polygon points="652,389 659,387 659,402 652,404.5" fill="#de7886" opacity="0.85"/><polygon points="445,437 451,443 449,449 444,445" fill="#e46a6e"/><polygon points="444,445 452,445 453,455 445,457" fill="#70707c"/><polygon points="450,443 456,446 455,450 449,448" fill="#e07078"/><polygon points="479,427 485,433 483,439 478,435" fill="#e46a6e"/><polygon points="478,435 486,435 487,445 479,447" fill="#70707c"/><polygon points="484,433 490,436 489,440 483,438" fill="#e07078"/><polygon points="518,415 524,421 522,427 517,423" fill="#e46a6e"/><polygon points="517,423 525,423 526,433 518,435" fill="#70707c"/><polygon points="523,421 529,424 528,428 522,426" fill="#e07078"/><polyline points="411.3,451 412.5,481.6" fill="none" stroke="#22222c" stroke-width="1.1"/><polyline points="427.8,448.2 429,476.2" fill="none" stroke="#22222c" stroke-width="0.8"/><polyline points="444.1,443.1 445.3,470.9" fill="none" stroke="#22222c" stroke-width="1.1"/><polyline points="460.2,438 461.4,465.7" fill="none" stroke="#22222c" stroke-width="0.8"/><polyline points="476.1,433.1 477.3,460.5" fill="none" stroke="#22222c" stroke-width="1.1"/><polyline points="491.8,428.1 493,455.4" fill="none" stroke="#22222c" stroke-width="0.8"/><polyline points="507.4,423.3 508.6,450.3" fill="none" stroke="#22222c" stroke-width="1.1"/><polyline points="522.7,418.5 523.9,445.3" fill="none" stroke="#22222c" stroke-width="0.8"/><polyline points="537.9,413.7 539.1,439.9" fill="none" stroke="#22222c" stroke-width="1.1"/><polyline points="552.8,409 554,434.3" fill="none" stroke="#22222c" stroke-width="0.8"/><polyline points="567.6,404.4 568.8,428.8" fill="none" stroke="#22222c" stroke-width="1.1"/><polyline points="582.3,399.8 583.5,423.3" fill="none" stroke="#22222c" stroke-width="0.8"/><polyline points="596.7,395.3 597.9,418.5" fill="none" stroke="#22222c" stroke-width="1.1"/><polyline points="611,390.8 612.2,414.4" fill="none" stroke="#22222c" stroke-width="0.8"/><polyline points="625.1,386.4 626.3,410.3" fill="none" stroke="#22222c" stroke-width="1.1"/><polyline points="639,382.1 640.2,406.3" fill="none" stroke="#22222c" stroke-width="0.8"/><polyline points="652.8,377.7 654,402" fill="none" stroke="#22222c" stroke-width="1.1"/><polyline points="666.4,373.5 667.6,396.7" fill="none" stroke="#22222c" stroke-width="0.8"/><polyline points="679.8,369.3 681,391.5" fill="none" stroke="#22222c" stroke-width="1.1"/><polyline points="693.1,365.1 694.3,386.4" fill="none" stroke="#22222c" stroke-width="0.8"/><polyline points="706.2,361.1 707.4,381.5" fill="none" stroke="#22222c" stroke-width="1.1"/><polyline points="719.1,357.1 720.3,376.6" fill="none" stroke="#22222c" stroke-width="0.8"/><polyline points="732,353.1 733.2,371.8" fill="none" stroke="#22222c" stroke-width="1.1"/><polyline points="744.6,349.2 745.8,367.1" fill="none" stroke="#22222c" stroke-width="0.8"/><polyline points="411.3,451 425.4,448.9 439.5,444.5 453.6,440.1 467.8,435.7 481.9,431.3 496,426.8 510.1,422.4 524.2,418 538.3,413.6 552.4,409.2 566.5,404.7 580.6,400.3 594.8,395.9 608.9,391.5 623,387.1 637.1,382.6 651.2,378.2 665.3,373.8 679.4,369.4 693.5,365 707.7,360.6 721.8,356.3 735.9,351.9 750,347.5" fill="none" stroke="#1c1c24" stroke-width="0.8"/><polyline points="411.3,482 425.4,477.4 439.5,472.8 453.6,468.2 467.8,463.6 481.9,459 496,454.4 510.1,449.8 524.2,445.2 538.3,440.2 552.4,434.9 566.5,429.6 580.6,424.4 594.8,419.4 608.9,415.3 623,411.3 637.1,407.2 651.2,403 665.3,397.6 679.4,392.1 693.5,386.7 707.7,381.4 721.8,376.1 735.9,370.8 750,365.5" fill="none" stroke="#33333c" stroke-width="0.9"/><polygon points="539,412.3 583.6,400 591.2,407.5 548.4,420.8" fill="#7a7acc"/><polygon points="539,412.3 548.4,420.8 547.5,455 537.6,445.5" fill="#d4808c"/><polygon points="548.4,420.8 591.2,407.5 589.3,440.8 547.5,455" fill="#8484d2"/><polygon points="553,428 569,423 568.4,446 552.4,451.4" fill="none" stroke="#c8c890" stroke-width="0.5" stroke-linejoin="round"/><polygon points="558,431 564,429.2 564,435.4 558,437.2" fill="#6a6ae0" stroke="#d8d8f0" stroke-width="0.5" stroke-linejoin="round"/><polygon points="557.6,441.6 563.6,439.8 563.6,446 557.6,447.8" fill="#6a6ae0" stroke="#d8d8f0" stroke-width="0.5" stroke-linejoin="round"/><polygon points="559.4,424.4 567,422 567,425.4 559.4,427.8" fill="#e08060"/><polyline points="570.4,422.5 569.8,447" fill="none" stroke="#c8c890" stroke-width="0.5"/><polyline points="580.4,419.4 579.6,444" fill="none" stroke="#c8c890" stroke-width="0.5"/><polygon points="584,420 587.4,419 587.4,421 584,422" fill="#e07070"/><polygon points="573.4,424 576.4,423 576.4,425 573.4,426" fill="#e07070"/><polygon points="584,425.2 587.4,424.2 587.4,426.2 584,427.2" fill="#e07070"/><polygon points="573.4,429.2 576.4,428.2 576.4,430.2 573.4,431.2" fill="#e07070"/><polygon points="584,430.4 587.4,429.4 587.4,431.4 584,432.4" fill="#e07070"/><polygon points="573.4,434.4 576.4,433.4 576.4,435.4 573.4,436.4" fill="#e07070"/><polygon points="584,435.6 587.4,434.6 587.4,436.6 584,437.6" fill="#e07070"/><polygon points="573.4,439.6 576.4,438.6 576.4,440.6 573.4,441.6" fill="#e07070"/><polygon points="584,440.8 587.4,439.8 587.4,441.8 584,442.8" fill="#e07070"/><polygon points="573.4,444.8 576.4,443.8 576.4,445.8 573.4,446.8" fill="#e07070"/><polygon points="660.8,376 678.9,369.7 689.3,377 670.9,382.7" fill="#9a9ab6"/><polygon points="660.8,376 670.9,382.7 669.7,412.5 658.9,403.5" fill="#8e8eac"/><polygon points="670.9,382.7 689.3,377 687.4,404.5 669.7,412.5" fill="#7e7ec4"/><polygon points="673.4,389 676,388.2 676,390 673.4,390.8" fill="#e07070"/><polygon points="683,386 685.6,385.2 685.6,387 683,387.8" fill="#e07070"/><polygon points="673.4,393.6 676,392.8 676,394.6 673.4,395.4" fill="#e07070"/><polygon points="683,390.6 685.6,389.8 685.6,391.6 683,392.4" fill="#e07070"/><polygon points="673.4,398.2 676,397.4 676,399.2 673.4,400" fill="#e07070"/><polygon points="683,395.2 685.6,394.4 685.6,396.2 683,397" fill="#e07070"/><polygon points="673.4,402.8 676,402 676,403.8 673.4,404.6" fill="#e07070"/><polygon points="683,399.8 685.6,399 685.6,400.8 683,401.6" fill="#e07070"/><polygon points="673.4,407.4 676,406.6 676,408.4 673.4,409.2" fill="#e07070"/><polygon points="683,404.4 685.6,403.6 685.6,405.4 683,406.2" fill="#e07070"/><polygon points="679,392.4 682,391.5 682,394.5 679,395.4" fill="#c8c060"/><polygon points="765.5,315 771,316.6 781.5,322 782.5,328.4 774,326 767,320.5" fill="#e0666e"/><polygon points="768,286.4 771,284.6 793,295.6 790.6,298" fill="#e6e6e6"/><polygon points="784.6,297 791.4,295.6 790.6,326 785,327.4" fill="#eaeaea"/><polygon points="782.6,320 792,318.4 793.4,328 783.4,330.4" fill="#dcdcdc"/><polygon points="768.4,286 771,284.6 772,290 769.5,291" fill="#dadada"/><polygon points="794.1,319 804.6,324.7 803.6,342.7 792.2,335.1" fill="#8a8aa8"/><polygon points="804.6,324.7 837.8,315.2 835.9,336.1 826.4,346.5 813.1,347.9 803.6,342.7" fill="#7a7aa2"/><polygon points="794.1,319 827.4,310.4 837.8,315.2 804.6,324.7" fill="#9c9ca6"/><polyline points="815.6,321.6 814.4,347" fill="none" stroke="#6a6a98" stroke-width="0.5"/><polyline points="826.6,318.4 825.2,345" fill="none" stroke="#6a6a98" stroke-width="0.5"/><polyline points="805,326.6 837.4,317.2" fill="none" stroke="#b8b078" stroke-width="0.6"/><polygon points="810,329 811.6,328.5 811.6,330 810,330.5" fill="#c8b850"/><polygon points="812,340 813.6,339.5 813.6,341 812,341.5" fill="#c8b850"/><polygon points="819,327 820.6,326.5 820.6,328 819,328.5" fill="#c8b850"/><polygon points="808.5,335 810.1,334.5 810.1,336 808.5,336.5" fill="#c8b850"/><polygon points="771.3,345.6 793.2,338 851.1,370.3 825.5,379.8" fill="#5294e4"/><polygon points="771.3,345.6 825.5,379.8 823.6,399.7 770.4,364" fill="#3f7fd2"/><polygon points="825.5,379.8 851.1,370.3 849.2,389.3 823.6,399.7" fill="#3a78c8"/><polygon points="802.7,369.6 821.7,381.2 820.7,395.4 801.7,383.6" fill="#4a4e57"/><polygon points="829,383.6 848,376.6 847,388 828,395.6" fill="#50545d"/><polyline points="802,377 821,389" fill="none" stroke="#3a3d45" stroke-width="0.6"/><polyline points="828.4,390 847.4,382.6" fill="none" stroke="#3e424a" stroke-width="0.6"/><polygon points="793.2,341 800.5,339 806,342.2 798.6,344.4" fill="#4a4a4e"/><polygon points="833,364 840.6,362 845.4,364.8 837.8,367" fill="#4a4a4e"/><polygon points="813.4,352.4 820.6,350.5 825,353 817.8,355" fill="#55555a"/><polyline points="781,350.4 810.5,342.6 810.5,356" fill="none" stroke="#c6ccd2" stroke-width="1.7"/><polyline points="804,361.4 833,353.6 829,371.8" fill="none" stroke="#c6ccd2" stroke-width="1.7"/><polyline points="812,356.4 833.4,350.6" fill="none" stroke="#c6ccd2" stroke-width="1.3"/><polygon points="827.4,369.6 830.6,368.8 830.6,372.4 827.4,373.2" fill="#7a7a80"/><polygon points="750.4,348.4 784.6,365.5 782.7,381.7 747.6,362.7" fill="#79716b"/><polygon points="784.6,365.5 795,358.9 793.4,374.6 782.7,381.7" fill="#625c57"/><polygon points="750.4,348.4 767.5,343.7 795,358.9 784.6,365.5" fill="#8c847c"/><polygon points="786.6,353 791.4,351.6 791.4,358.4 786.6,359.8" fill="#6c6c70"/><polygon points="784.6,366.5 806.5,360.7 807,365.5 785.4,371.6" fill="#e0585e"/><polygon points="787.4,369.4 791.4,368.4 790.6,384 786.8,385" fill="#4e4444"/><polygon points="797,366.5 801,365.5 800,382 796.4,383" fill="#4e4444"/><polyline points="788,385 787,399" fill="none" stroke="#c8c8c8" stroke-width="1.2"/><polyline points="798,383 796.4,398" fill="none" stroke="#c8c8c8" stroke-width="1.2"/><polyline points="746.6,363.6 745.6,383.6" fill="none" stroke="#5858d6" stroke-width="2.6"/><polyline points="781.4,382.4 779,406" fill="none" stroke="#5858d6" stroke-width="2.6"/><polyline points="757.4,369 756.4,389" fill="none" stroke="#5858d6" stroke-width="2"/><polyline points="769,375.4 768,396" fill="none" stroke="#5858d6" stroke-width="2"/><polyline points="745.6,383.6 779,406" fill="none" stroke="#5858d6" stroke-width="2"/><polyline points="746,377 780,398.4" fill="none" stroke="#5858d6" stroke-width="1.6"/><polygon points="748.4,366.4 780,383.6 779.4,394.4 747.6,376.4" fill="#ececf4" opacity="0.75"/><polygon points="743,378.4 745,375.6 796,402.4 794.4,406.4" fill="#bcbcbc"/><polyline points="744,377.4 795.4,404" fill="none" stroke="#e2e2e2" stroke-width="1.1"/><polyline points="794.4,404.4 799,409.6" fill="none" stroke="#c4c4c4" stroke-width="1"/><polyline points="857.3,373 867.2,390.6" fill="none" stroke="#dcd45c" stroke-width="1.2"/><polyline points="857.3,376.5 867.2,394.9" fill="none" stroke="#dcd45c" stroke-width="1.2"/><polyline points="857.3,379.9 867.2,399.2" fill="none" stroke="#dcd45c" stroke-width="1.2"/><polyline points="857.9,370.5 856.7,382.6" fill="none" stroke="#5a5a5a" stroke-width="2.2"/><polyline points="862.9,378.9 861.6,392.5" fill="none" stroke="#5a5a5a" stroke-width="2.2"/><polyline points="867.8,387.4 866.6,402.4" fill="none" stroke="#5a5a5a" stroke-width="2.2"/><polyline points="851,370.2 857.3,373" fill="none" stroke="#dcd45c" stroke-width="1.2"/><polyline points="851,373.2 857.3,376.5" fill="none" stroke="#dcd45c" stroke-width="1.2"/><polyline points="851,376.2 857.3,379.9" fill="none" stroke="#dcd45c" stroke-width="1.2"/><polyline points="851.6,368 850.4,378.6" fill="none" stroke="#5a5a5a" stroke-width="2.2"/><polyline points="857.9,370.5 856.7,382.6" fill="none" stroke="#5a5a5a" stroke-width="2.2"/><polyline points="721,369.8 758.7,394.9" fill="none" stroke="#dcd45c" stroke-width="1.2"/><polyline points="721,374.5 758.7,400.6" fill="none" stroke="#dcd45c" stroke-width="1.2"/><polyline points="721,379.2 758.7,406.2" fill="none" stroke="#dcd45c" stroke-width="1.2"/><polyline points="721.6,366.4 720.4,382.6" fill="none" stroke="#5a5a5a" stroke-width="2.2"/><polyline points="740.5,378.6 739.2,396.4" fill="none" stroke="#5a5a5a" stroke-width="2.2"/><polyline points="759.3,390.8 758.1,410.2" fill="none" stroke="#5a5a5a" stroke-width="2.2"/><polyline points="758.7,394.9 779.8,409.3" fill="none" stroke="#dcd45c" stroke-width="1.2"/><polyline points="758.7,400.6 779.8,415" fill="none" stroke="#dcd45c" stroke-width="1.2"/><polyline points="758.7,406.2 779.8,420.6" fill="none" stroke="#dcd45c" stroke-width="1.2"/><polyline points="759.3,390.8 758.1,410.2" fill="none" stroke="#5a5a5a" stroke-width="2.2"/><polyline points="780.4,405.2 779.2,424.6" fill="none" stroke="#5a5a5a" stroke-width="2.2"/><polyline points="805.2,413.5 867.2,390.6" fill="none" stroke="#dcd45c" stroke-width="1.2"/><polyline points="805.2,418.8 867.2,394.9" fill="none" stroke="#dcd45c" stroke-width="1.2"/><polyline points="805.2,424.1 867.2,399.2" fill="none" stroke="#dcd45c" stroke-width="1.2"/><polyline points="805.8,409.6 804.6,427.9" fill="none" stroke="#5a5a5a" stroke-width="2.2"/><polyline points="826.5,402.2 825.3,419.4" fill="none" stroke="#5a5a5a" stroke-width="2.2"/><polyline points="847.1,394.8 845.9,410.9" fill="none" stroke="#5a5a5a" stroke-width="2.2"/><polyline points="867.8,387.4 866.6,402.4" fill="none" stroke="#5a5a5a" stroke-width="2.2"/><polygon points="131,512 137.4,525.3 247,494 241,472 232,469" fill="#5e5e62"/><polygon points="137.4,523.5 247,492.2 247,494.2 137.4,525.5" fill="#3c3c42"/><polygon points="149,519.2 161,516.6 161.4,518.4 149.4,521" fill="#ececec"/><polygon points="218,498.8 229.4,496.2 229.8,498 218.4,500.6" fill="#ececec"/><path d="M124.300 484.800L134.500 479.100L149.600 472.200L168.600 465.200L188.900 460.800L206.600 460.600L225.600 459.500L230.700 462.700L232.800 470.300L233.800 480.400L229.400 484.600L214.200 488.400L209.100 496.800L171.200 508.200L159.800 510.800L143.300 512L134.500 515.800L128.800 513.300L126.200 504.400z" fill="#74757a" stroke="#222224" stroke-width="1" stroke-linejoin="round"/><polygon points="129.4,501.9 149.6,496.8 159.8,505.7 148,511 134,512.5 128.500,509" fill="#96979c"/><polygon points="209.1,484.6 230.7,480.4 232.400,483 211.7,490.5" fill="#c2c3c8"/><polygon points="125.5,486 134,481 146,476 150,486 136,494 127,497" fill="#8e8f94"/><polygon points="206,462.5 225,461 229.5,464 231.4,478 214,482.600 208,478" fill="#66676b"/><polygon points="151.5,476.6 171.2,468.4 175.6,477.2 159.8,482.3" fill="#dedede" stroke="#141416" stroke-width="1" stroke-linejoin="round"/><polygon points="173.7,467.7 194,463.3 200.9,469 180,475.3" fill="#dedede" stroke="#141416" stroke-width="1" stroke-linejoin="round"/><polygon points="149.6,496.2 159.8,488 175,482.3 194,480.4 205.3,483.5 209.8,491.8 206.600,495.6 171.2,506.3 161,503.2" fill="#7a7b80" stroke="#0e0e10" stroke-width="1.2" stroke-linejoin="round"/><polygon points="163,492 175,486 182,498 170,502.5" fill="#58595d"/><polygon points="181,485.5 194,483.4 203,486 205.500,492 189,497.4" fill="#66676b"/><polyline points="176.2,482.7 187,501.3" fill="none" stroke="#0e0e10" stroke-width="1.5"/><polyline points="194.5,481 199.500,496.5" fill="none" stroke="#2a2a2e" stroke-width="0.8"/><polyline points="134.5,479.1 150,486.5 160,488" fill="none" stroke="#18181a" stroke-width="0.8"/><polyline points="200.9,469 207,481" fill="none" stroke="#18181a" stroke-width="1"/><polyline points="206.6,460.6 212,476 209,484" fill="none" stroke="#18181a" stroke-width="0.9"/><polygon points="138,486 146,483 148,489 140,492" fill="#3a3b3f"/><polygon points="140,494.5 147,492 148.500,496 141.5,498.5" fill="#3a3b3f"/><polygon points="129,505 134,504 134,507.5 129.5,508.5" fill="#2e2e32"/><polyline points="216,466 226,465 228,474" fill="none" stroke="#8a8b90" stroke-width="0.8"/><polyline points="149.6,472.2 168.6,465.2 188.9,460.8 206.6,460.6" fill="none" stroke="#2a2a2c" stroke-width="1.2"/><polyline points="212,464 222,463 226,470 216,473 212,464" fill="none" stroke="#2a2a2c" stroke-width="0.8"/><polyline points="214,476 228,472.5" fill="none" stroke="#2a2a2c" stroke-width="0.8"/><polyline points="219,462 222,478" fill="none" stroke="#2e2e30" stroke-width="0.7"/><polygon points="160,489.5 171,484.5 174,489 163,494" fill="#8a8b90"/><polyline points="128,499 148,493.5 158,488.5" fill="none" stroke="#a8a9ae" stroke-width="0.9"/><polygon points="144,509.5 158,506.5 159,509.5 145,512" fill="#4a4b4f"/><polygon points="214.6,373.8 223.4,372.2 252.1,523.6 242.7,525.4" fill="#d0d0d0"/><polygon points="214.6,373.8 217.2,373.3 245.5,524.9 242.7,525.4" fill="#b4b4b4"/><ellipse cx="247.400" cy="524.5" rx="4.200" ry="1.800" fill="#c8c8c8"/><polygon points="200.3,347.2 206.1,346 231.4,469.4 225.6,470.6" fill="#cbcbcb"/><polygon points="200.3,347.2 202.9,346.7 228.2,470.1 225.6,470.6" fill="#adadad"/><polygon points="179.6,352.5 181.2,350.1 195.5,359.6 193.9,362" fill="#cbcbcb"/><polygon points="179.6,352.5 180.3,351.4 194.6,360.9 193.9,362" fill="#adadad"/><polygon points="195.9,362.9 193.5,361.1 202,350.4 204.4,352.2" fill="#cbcbcb"/><polygon points="195.9,362.9 194.8,362.1 203.3,351.4 204.4,352.2" fill="#adadad"/><polygon points="189.4,382.6 192.4,380.8 225.5,435.1 222.5,436.9" fill="#cbcbcb"/><polygon points="189.4,382.6 190.7,381.8 223.8,436.1 222.5,436.9" fill="#adadad"/><polygon points="214.9,385.5 217.1,387.5 208.1,398 205.9,396" fill="#cbcbcb"/><polygon points="214.9,385.5 215.9,386.4 206.9,396.9 205.9,396" fill="#adadad"/><polygon points="20.9,469.2 27.1,466.8 53.7,532.8 47.5,535.2" fill="#c2c2c2"/><polygon points="20.9,469.2 23.7,468.1 50.3,534.1 47.5,535.2" fill="#a8a8a8"/><polygon points="47.3,534.3 53.9,533.7 60.3,612.7 53.7,613.3" fill="#c2c2c2"/><polygon points="47.3,534.3 50.3,534 56.7,613 53.7,613.3" fill="#a8a8a8"/><polygon points="21.2,525 26.8,523 55.8,605 50.2,607" fill="#c2c2c2"/><polygon points="21.2,525 23.7,524.1 52.7,606.1 50.2,607" fill="#a8a8a8"/><polygon points="46.6,528 52.6,530 52.6,540 46.6,538" fill="#c4c4c4"/><polygon points="29,369 205,330.4 208.7,345 29,382.5" fill="#a4a4a4"/><polygon points="29,366 199.6,328.4 205,330.4 29,369.5" fill="#b4b4b4"/><polygon points="29,367 193.6,332.8 193.6,335.6 29,369.8" fill="#d9d96a"/><polygon points="29,377.5 208,340 208.7,345 29,382.5" fill="#989898"/><polygon points="29,402.5 218.9,359.5 222.7,374.7 29,418.5" fill="#a4a4a4"/><polygon points="29,399.5 213.5,357.4 218.9,359.5 29,403" fill="#b4b4b4"/><polygon points="29,400.4 205.6,361.6 205.6,364.4 29,403.2" fill="#d9d96a"/><polygon points="29,413.5 222,370 222.7,374.7 29,418.5" fill="#989898"/><polygon points="137.4,355.5 147.4,353.2 150.5,355 150.5,366.6 140.4,367.8 137.4,365.5" fill="#e99a7c"/><polygon points="29,361 44.6,357.5 45.4,364.8 29,368.4" fill="#7878d8"/><polygon points="29,392 46.6,388 47.4,395.4 29,399.4" fill="#7878d8"/><polygon points="38.6,383 41.6,382.4 41.6,389 38.6,389.6" fill="#c0c0c0"/><path d="M868.600 583.400V563.600" stroke="#2a2ae0" stroke-width="1.200"/><path d="M868.600 583.400l-10.600-9.600" stroke="#22d022" stroke-width="1.200"/><path d="M868.600 583.400l20.600-5.200" stroke="#e02222" stroke-width="1.200"/><circle cx="889.600" cy="578" r="1.200" fill="#e02222"/><circle cx="868.600" cy="563.400" r="1" fill="#2a2ae0"/></svg></div>
<div class="abs" style="left:29px;top:95px;width:1px;height:517px;background:rgba(160,170,180,.55)"></div>
<div id="log" class="abs"></div>
<div id="panel" class="abs"></div>
<div class="abs" style="left:897px;top:94px;width:248px;height:12px;background:#f0f0f0"></div>
<div class="abs" style="left:896px;top:94px;width:4px;height:538px;background:#f0f0f0"></div>
<div class="abs" style="left:900px;top:106px;width:245px;height:2px;background:#858585"></div>
<div class="abs" style="left:900px;top:106px;width:2px;height:526px;background:#858585"></div>
<div class="abs" style="left:1136.2px;top:97px;width:7.2px;height:7.4px;border-radius:2px;background:#c6c6c6"></div>
<svg width="1174" height="632"><path d="M1137.6 98.6l4.4 4.400M1142 98.600l-4.400 4.400" stroke="#505050" stroke-width=".9" fill="none"/></svg>
<div class="abs combo" style="top:116px"></div>
<div class="abs combo" style="top:134.5px"></div>
<div class="abs combo" style="top:152.5px"></div>
<div class="abs" style="left:971px;top:172px;width:168px;height:1px;background:#d2d2d2;border-bottom:0"></div>
<div class="abs" style="left:907px;top:204.5px;width:232px;height:1px;background:#d2d2d2"></div>
<div class="abs btn" style="left:974px"></div>
<div class="abs btn" style="left:1001.5px"></div>
<div class="abs btn" style="left:1029.3px"></div>
<div class="abs btn" style="left:1056.7px"></div>
<div class="abs btn" style="left:1084.2px"></div>
<div class="abs btn" style="left:1111.6px"></div>
<div class="abs" style="left:909px;top:209px;width:227px;height:124px;border:1px solid #dcdcdc;border-radius:2px;background:#e6e6e6"></div>
<div class="abs" style="left:909px;top:343.5px;width:227px;height:150px;border:1px solid #dcdcdc;border-radius:2px;background:#e6e6e6"></div>
<div class="abs" style="left:909px;top:502px;width:227px;height:135px;border:1px solid #dcdcdc;border-radius:2px;background:#e6e6e6"></div>
<div class="abs row" style="top:211px;background:#ffaeae;border-color:#c98a8a #ffd0d0 #ffd0d0 #c98a8a"><span class="lab">Tx</span><div class="trk" style="left:32px;width:109px"><div class="fill" style="width:54px"></div><div class="knob" style="left:50.5px"></div></div><div class="spin">0<b>.</b>0000<i></i></div></div>
<div class="abs row" style="top:231.15px;background:#aeffae;border-color:#86c486 #d2ffd2 #d2ffd2 #86c486"><span class="lab">Ty</span><div class="trk" style="left:32px;width:109px"><div class="fill" style="width:54px"></div><div class="knob" style="left:50.5px"></div></div><div class="spin">0<b>.</b>0000<i></i></div></div>
<div class="abs row" style="top:251.3px;background:#aeaeff;border-color:#8888c8 #d0d0ff #d0d0ff #8888c8"><span class="lab">Tz</span><div class="trk" style="left:32px;width:109px"><div class="fill" style="width:54px"></div><div class="knob" style="left:50.5px"></div></div><div class="spin">0<b>.</b>0000<i></i></div></div>
<div class="abs row" style="top:271.45px;background:#aeffff;border-color:#88c6c6 #d4ffff #d4ffff #88c6c6"><span class="lab">Rx</span><div class="trk" style="left:32px;width:109px"><div class="fill" style="width:54px"></div><div class="knob" style="left:50.5px"></div></div><div class="spin">0<b>.</b>0000<i></i></div></div>
<div class="abs row" style="top:291.6px;background:#ffaeff;border-color:#c688c6 #ffd2ff #ffd2ff #c688c6"><span class="lab">Ry</span><div class="trk" style="left:32px;width:109px"><div class="fill" style="width:54px"></div><div class="knob" style="left:50.5px"></div></div><div class="spin">0<b>.</b>0000<i></i></div></div>
<div class="abs row" style="top:311.75px;background:#ffffae;border-color:#c6c688 #ffffd6 #ffffd6 #c6c688"><span class="lab">Rz</span><div class="trk" style="left:32px;width:109px"><div class="fill" style="width:54px"></div><div class="knob" style="left:50.5px"></div></div><div class="spin">0<b>.</b>0000<i></i></div></div>
<div class="abs row" style="top:345.9px;background:#c6d6f6;border-color:#98a6c4 #dde7fb #dde7fb #98a6c4"><span class="lab">A1</span><div class="trk" style="left:42.6px;width:89.5px"><div class="knob" style="left:0px"></div></div><div class="spin">0<b>.</b>0000<i></i></div></div>
<div class="abs row" style="top:366.7px;background:#c6d6f6;border-color:#98a6c4 #dde7fb #dde7fb #98a6c4"><span class="lab">A2</span><div class="trk" style="left:42.6px;width:89.5px"><div class="knob" style="left:0px"></div></div><div class="spin">0<b>.</b>0000<i></i></div></div>
<div class="abs row" style="top:387.5px;background:#c6d6f6;border-color:#98a6c4 #dde7fb #dde7fb #98a6c4"><span class="lab">A3</span><div class="trk" style="left:42.6px;width:89.5px"><div class="knob" style="left:0px"></div></div><div class="spin">0<b>.</b>0000<i></i></div></div>
<div class="abs row" style="top:408.3px;background:#c6d6f6;border-color:#98a6c4 #dde7fb #dde7fb #98a6c4"><span class="lab">A4</span><div class="trk" style="left:42.6px;width:89.5px"><div class="knob" style="left:0px"></div></div><div class="spin">0<b>.</b>0000<i></i></div></div>
<div class="abs row" style="top:429.1px;background:#c6d6f6;border-color:#98a6c4 #dde7fb #dde7fb #98a6c4"><span class="lab">A5</span><div class="trk" style="left:42.6px;width:89.5px"><div class="knob" style="left:0px"></div></div><div class="spin">0<b>.</b>0000<i></i></div></div>
<div class="abs row" style="top:449.9px;background:#c6d6f6;border-color:#98a6c4 #dde7fb #dde7fb #98a6c4"><span class="lab">A6</span><div class="trk" style="left:42.6px;width:89.5px"><div class="knob" style="left:0px"></div></div><div class="spin">0<b>.</b>0000<i></i></div></div>
<div class="abs row" style="top:470.7px;background:#c6d6f6;border-color:#98a6c4 #dde7fb #dde7fb #98a6c4"><span class="lab">A7</span><div class="trk" style="left:42.6px;width:89.5px"><div class="knob" style="left:0px"></div></div><div class="spin">0<b>.</b>0000<i></i></div></div>
<div class="abs row" style="top:505.5px;background:#f1c97b;border-color:#b99a5c #f8dea8 #f8dea8 #b99a5c"><span class="lab">S1</span><div class="trk" style="left:42.6px;width:89.5px"><div class="knob" style="left:0px"></div></div><div class="spin">0<b>.</b>0000<i></i></div></div>
<div class="abs row" style="top:526.3px;background:#f1c97b;border-color:#b99a5c #f8dea8 #f8dea8 #b99a5c"><span class="lab">S2</span><div class="trk" style="left:42.6px;width:89.5px"><div class="knob" style="left:0px"></div></div><div class="spin">0<b>.</b>0000<i></i></div></div>
<div class="abs row" style="top:547.1px;background:#f1c97b;border-color:#b99a5c #f8dea8 #f8dea8 #b99a5c"><span class="lab">S3</span><div class="trk" style="left:42.6px;width:89.5px"><div class="knob" style="left:0px"></div></div><div class="spin">0<b>.</b>0000<i></i></div></div>
<div class="abs row" style="top:567.9px;background:#f1c97b;border-color:#b99a5c #f8dea8 #f8dea8 #b99a5c"><span class="lab">S4</span><div class="trk" style="left:42.6px;width:89.5px"><div class="knob" style="left:0px"></div></div><div class="spin">0<b>.</b>0000<i></i></div></div>
<div class="abs row" style="top:588.7px;background:#f1c97b;border-color:#b99a5c #f8dea8 #f8dea8 #b99a5c"><span class="lab">S5</span><div class="trk" style="left:42.6px;width:89.5px"><div class="knob" style="left:0px"></div></div><div class="spin">0<b>.</b>0000<i></i></div></div>
<div class="abs row" style="top:609.5px;background:#f1c97b;border-color:#b99a5c #f8dea8 #f8dea8 #b99a5c"><span class="lab">S6</span><div class="trk" style="left:42.6px;width:89.5px"><div class="knob" style="left:0px"></div></div><div class="spin">0<b>.</b>0000<i></i></div></div>
<svg width="1174" height="632"><text x="903.3" y="103.3" font-family="'Liberation Serif','Noto Serif CJK SC',serif" font-size="7.5" fill="#222">示教</text><text x="912.8" y="126" font-family="'Liberation Serif','Noto Serif CJK SC',serif" font-size="7.8" fill="#1a1a1a">选择机器人：</text><text x="912.8" y="144.4" font-family="'Liberation Serif','Noto Serif CJK SC',serif" font-size="7.8" fill="#1a1a1a">选择示教点：</text><text x="912.8" y="162.4" font-family="'Liberation Serif','Noto Serif CJK SC',serif" font-size="7.8" fill="#1a1a1a">选择坐标系：</text></svg>
<svg width="1174" height="632"><path d="M917.9 194.8h17.9l4.100 6.900h-28.200z" fill="#f2f2f2" stroke="#5a5a5a" stroke-width=".7"/><path d="M911.4 202.600h28.800" stroke="#555" stroke-width="1.700"/><path d="M919 199.200c2-3.400 4.200-4.800 6.800-4.800s6 1.600 8.800 4.600M920.500 198.400c3.500-1.400 9-1.400 12 0" fill="none" stroke="#777" stroke-width=".6"/><rect x="947.6" y="197.600" width="18.200" height="5.600" fill="#f4f4f4" stroke="#4a4a4a" stroke-width=".9"/><path d="M950.200 197.600l3-12h8.200l3.600 12z" fill="#f4f4f4" stroke="#5a5a5a" stroke-width=".8"/><rect x="955.400" y="188" width="3.600" height="8" rx="1.600" fill="#f8f8f8" stroke="#888" stroke-width=".6"/><path d="M944.600 171.600l4.400-2 13.400 12.600-1.400 4.200-8.400-.600z" fill="#efefef" stroke="#5a5a5a" stroke-width=".7"/><path d="M947 172.500l12.500 12M949.500 171l12 11.800M945.800 174l8 10.500" stroke="#888" stroke-width=".4"/><path d="M945 170.200l3.600 7.200-18.400 7.600-3.800-.600-1.600-3.600 2.400-1.400z" fill="#efefef" stroke="#5a5a5a" stroke-width=".7"/><path d="M944 172.400l-15.500 9M946 174.800l-16 8.600M931 178.500l2 5" stroke="#888" stroke-width=".4"/><circle cx="947.700" cy="174.400" r="4.300" fill="#f6f6f6" stroke="#5a5a5a" stroke-width=".7"/><circle cx="947.700" cy="174.400" r="2.300" fill="#fff" stroke="#999" stroke-width=".5"/><path d="M922.400 182.200l4.400-1.400 1.400 3-1.800 2.200-1 3.600-1.800.200-.800-3.600-1.400-1.400z" fill="#e6e6e6" stroke="#5a5a5a" stroke-width=".7"/><path d="M977.4 197.600v-5.600h5.600v5.600z" fill="#111"/><circle cx="980.2" cy="190.800" r="2.500" fill="#111"/><path d="M979.6 189.500l-1.200-7.400 5.200-2 7.600 3.400" fill="none" stroke="#111" stroke-width="1.800" stroke-linejoin="round"/><circle cx="978.4" cy="182.200" r="1.500" fill="#111"/><circle cx="983.6" cy="180.200" r="1.500" fill="#111"/><path d="M993.8 183.200a2.300 2.300 0 1 1-.6 3.200" fill="none" stroke="#111" stroke-width="1"/><path d="M1004.9 197.600v-5.600h5.600v5.600z" fill="#111"/><circle cx="1007.7" cy="190.800" r="2.500" fill="#111"/><path d="M1007.1 189.500l-1.200-7.400 5.200-2 7.600 3.400" fill="none" stroke="#111" stroke-width="1.800" stroke-linejoin="round"/><circle cx="1005.9" cy="182.200" r="1.500" fill="#111"/><circle cx="1011.1" cy="180.200" r="1.500" fill="#111"/><path d="M1021.3 183.200a2.300 2.300 0 1 1-.6 3.200" fill="none" stroke="#111" stroke-width="1"/><path d="M987.600 191.200h7.400l-3.700 4.200zM987.600 196.400h7.400v1.500h-7.400z" fill="#111"/><path d="M1015 195.600h7.400l-3.700-4.600zM1015 196.600h7.400v1.400h-7.400z" fill="#111"/><path d="M1031.300 183.300h14.300" stroke="#111" stroke-width="1.300"/><circle cx="1037.900" cy="183.3" r="1.700" fill="#111"/><circle cx="1048.700" cy="183.3" r="1.200" fill="none" stroke="#444" stroke-width=".6"/><path d="M1031.300 188.600h14.300" stroke="#111" stroke-width="1.300"/><circle cx="1037.900" cy="188.6" r="1.700" fill="#111"/><circle cx="1048.700" cy="188.6" r="1.200" fill="none" stroke="#444" stroke-width=".6"/><path d="M1031.300 193.800h14.300" stroke="#111" stroke-width="1.300"/><circle cx="1037.900" cy="193.8" r="1.700" fill="#111"/><circle cx="1048.700" cy="193.8" r="1.200" fill="none" stroke="#444" stroke-width=".6"/><path d="M1059.600 183.600v-4.400h4.600M1073.200 179.200h4.600v4.400M1077.800 193.200v4.400h-4.600M1064.200 197.600h-4.600v-4.400" fill="none" stroke="#222" stroke-width="1.100"/><circle cx="1068.500" cy="188.400" r="3.500" fill="none" stroke="#222" stroke-width="1"/><path d="M1068.500 182.800v3M1068.500 191v3M1062.800 188.400h3M1071.200 188.400h3" stroke="#222" stroke-width=".9"/><path d="M1088.400 194a8.400 8.400 0 1 1 14.800 0" fill="none" stroke="#111" stroke-width="1.500"/><rect x="1087.600" y="194.400" width="17" height="3.400" rx=".6" fill="#111"/><path d="M1089.800 196.100h1.400M1093.400 196.100h1.400M1097 196.100h1.400M1100.600 196.100h1.400" stroke="#f4f4f4" stroke-width="1"/><path d="M1094.800 194.400l-1.800-8.600 6.600-1" fill="none" stroke="#111" stroke-width="1.900" stroke-linejoin="round"/><circle cx="1099.800" cy="184.800" r="1.700" fill="#f4f4f4" stroke="#111" stroke-width="1"/><circle cx="1093" cy="185.800" r="1.500" fill="#111"/><path d="M1092.500 194.400l1-3.600h3.600l1 3.600z" fill="#111"/><path d="M1116 186.600c.2-2.600 1.600-4.200 4-4.800" fill="none" stroke="#111" stroke-width="1.700"/><path d="M1119.400 179.600l3.400 2.200-3 2.800z" fill="#111"/><path d="M1122.400 184.400h8v4.600h-8z" fill="#f8f8f8" stroke="#111" stroke-width="1"/><path d="M1122.400 184.400l2.200-3h7.600v4.800l-1.800 2.800M1130.400 184.400l1.800-3" fill="none" stroke="#111" stroke-width="1"/><path d="M1115.400 192.600l7.600-2.800 1.800 4.800-7.600 2.800z" fill="#111"/><circle cx="1123" cy="192.600" r="2.400" fill="#f8f8f8" stroke="#111" stroke-width=".8"/></svg>
<svg width="1174" height="632" viewBox="0 0 1174 632"><defs>
<linearGradient id="gb" x1="0" y1="0" x2="0" y2="1"><stop offset="0" stop-color="#6fbdee"/><stop offset="1" stop-color="#167bd0"/></linearGradient>
<linearGradient id="gb2" x1="0" y1="0" x2="0" y2="1"><stop offset="0" stop-color="#4fa8e6"/><stop offset="1" stop-color="#1a7ed2"/></linearGradient>
<linearGradient id="gg" x1="0" y1="0" x2="0" y2="1"><stop offset="0" stop-color="#c2c2c2"/><stop offset="1" stop-color="#8e8e8e"/></linearGradient>
<linearGradient id="gg2" x1="0" y1="0" x2="0" y2="1"><stop offset="0" stop-color="#bdbdbd"/><stop offset="1" stop-color="#8a8a8a"/></linearGradient>
<linearGradient id="gbtn" x1="0" y1="0" x2="0" y2="1"><stop offset="0" stop-color="#62b4ee"/><stop offset=".55" stop-color="#2088d8"/><stop offset="1" stop-color="#0e70c4"/></linearGradient>
<linearGradient id="gbtng" x1="0" y1="0" x2="0" y2="1"><stop offset="0" stop-color="#c4c4c4"/><stop offset="1" stop-color="#8c8c8c"/></linearGradient>
</defs><linearGradient id="gico" x1="0" y1="0" x2="1" y2="1"><stop offset="0" stop-color="#2196dc"/><stop offset="1" stop-color="#0858a6"/></linearGradient><rect x="1.100" y="1.700" width="9.800" height="10" rx="1.500" fill="url(#gico)"/><circle cx="8.100" cy="6.100" r="1.300" fill="#5ab4e8" opacity=".8"/><path d="M3.600 10.200l.800-4.600c.400-1.400 1.400-2.200 2.800-2" fill="none" stroke="#4aa8e2" stroke-width=".7" opacity=".75"/><path d="M3.200 10.300h2.800" stroke="#58b0e6" stroke-width=".6" opacity=".8"/><path d="M1100 6.500h6.800" stroke="#333" stroke-width=".9"/><path d="M1127.500 4.600h5v5h-5zM1129 4.600v-1.300h5v5h-1.400" stroke="#333" stroke-width=".9" fill="none"/><path d="M1155.600 3.400l6.600 6.600M1162.200 3.400l-6.600 6.600" stroke="#333" stroke-width=".9"/><text x="6" y="24" font-family="'Liberation Sans','Noto Sans CJK SC',sans-serif" font-size="9.300" fill="#1c1c1c">文件</text><text x="34" y="24" font-family="'Liberation Sans','Noto Sans CJK SC',sans-serif" font-size="9.300" fill="#1c1c1c">编辑</text><text x="62" y="24" font-family="'Liberation Sans','Noto Sans CJK SC',sans-serif" font-size="9.300" fill="#1c1c1c">设置</text><text x="90" y="24" font-family="'Liberation Sans','Noto Sans CJK SC',sans-serif" font-size="9.300" fill="#1c1c1c">工具</text><text x="118" y="24" font-family="'Liberation Sans','Noto Sans CJK SC',sans-serif" font-size="9.300" fill="#1c1c1c">帮助</text><path d="M9.200 35.400H29l6.600 6.200v13.300a1.400 1.400 0 0 1-1.400 1.400H9.200a1.400 1.400 0 0 1-1.400-1.400V36.800a1.400 1.400 0 0 1 1.400-1.400z" fill="url(#gb)"/><path d="M29 35.400l6.600 6.200H30a1 1 0 0 1-1-1z" fill="#f6fafd" stroke="#b9c7d2" stroke-width=".5"/><path d="M48 54.800V36.600a1.200 1.200 0 0 1 1.200-1.200h7.200l2.200 2.600h10a1.200 1.200 0 0 1 1.200 1.200v4.400H52z" fill="#fcfcfc" stroke="#bcbcbc" stroke-width=".7"/><path d="M52.600 43.600h22.600a.8.8 0 0 1 .76 1.050l-3.500 10a1.200 1.200 0 0 1-1.100.750H48.800a.8.8 0 0 1-.76-1.050l3.500-10a1.200 1.200 0 0 1 1.060-.75z" fill="url(#gb)"/><path d="M91.400 33.200h18.200l4.200 4v19a1.800 1.800 0 0 1-1.800 1.800H91.400a1.800 1.800 0 0 1-1.800-1.800V35a1.800 1.800 0 0 1 1.800-1.800z" fill="url(#gb)"/><path d="M95.400 33.600h12.800v6.600a.8.8 0 0 1-.8.800H96.200a.8.8 0 0 1-.8-.8z" fill="#f7f7f7"/><rect x="103.2" y="35" width="3.2" height="3.6" rx=".6" fill="#333"/><path d="M93.400 57.200V46.600a.9.9 0 0 1 .9-.9h14.700a.9.9 0 0 1 .9.900V57.200z" fill="#f7f7f7"/><path d="M95.400 48.900h12.800M95.400 52h12.800M95.400 55h12.800" stroke="#2e2e2e" stroke-width="1.9"/><path d="M122.800 31v30M288 31v30" stroke="#dedede" stroke-width="1"/><rect x="126.400" y="29.300" width="38.400" height="33.200" rx="2" fill="#dddddd" stroke="#c9c9c9" stroke-width=".8"/><path d="M134.300 34.700L152.500 40.300L148.400 44.200L156.300 52.600L152.600 56.800L144.200 48.700L139.900 52.200z" fill="url(#gb)"/><path d="M180.300 43.350H186.900V50.150H180.300z" fill="url(#gb2)"/><path d="M180.300 43.350l3.400 -1.700h6.600l-3.400 1.700z" fill="#7cc4f0"/><path d="M186.900 43.350l3.400 -1.700v6.800l-3.400 1.700z" fill="#1468b0"/><g stroke="#1c1c1c" stroke-width="1.3" fill="#1c1c1c"><path d="M185.400 37.600v-4M185.400 54.300v4M176.900 45.900h-4M193.800 45.900h4"/></g><path d="M185.400 31.400l2.300 3.100h-4.600zM185.400 60.200l2.300-3.100h-4.600zM170.900 45.900l3.100-2.300v4.600zM199.600 45.900l-3.100-2.300v4.600z" fill="#1c1c1c"/><path d="M237.600 50.400A13.600 13.600 0 1 0 231.500 57.300" fill="none" stroke="#262626" stroke-width="1.3"/><path d="M230.200 54.200l6.900-2.100-1.500 6.400z" fill="#1c1c1c"/><path d="M219.900 43.350H226.500V50.150H219.900z" fill="url(#gb2)"/><path d="M219.900 43.350l3.400 -1.700h6.600l-3.400 1.700z" fill="#7cc4f0"/><path d="M226.500 43.350l3.400 -1.700v6.800l-3.400 1.700z" fill="#1468b0"/><path d="M249.800 36v-4.800h4.400M275 31.200h4.400V36M279.400 55.200V60H275M254.200 60h-4.400v-4.800" fill="none" stroke="#3a3a3a" stroke-width="1.2"/><path d="M256.800 41.700H267.400V52.500H256.800z" fill="url(#gb2)"/><path d="M256.800 41.700l5.2 -2.600h10.600l-5.200 2.600z" fill="#7cc4f0"/><path d="M267.400 41.700l5.2 -2.600v10.800l-5.200 2.600z" fill="#1468b0"/><path d="M296.400 44.400L306.400 35.800V40.800C314 41 320 45.500 321.200 55.600C318 50.600 313.500 48.400 306.400 48.400V53.200z" fill="url(#gb)"/><path d="M296.400 44.400L306.400 35.800V40.800C314 41 320 45.500 321.200 55.600C318 50.600 313.500 48.400 306.400 48.400V53.200z" fill="url(#gg2)" transform="translate(657 0) scale(-1 1)"/><circle cx="913.3" cy="45.800" r="13.5" fill="url(#gbtn)"/><circle cx="953.1" cy="45.800" r="13.5" fill="url(#gbtn)"/><circle cx="993" cy="45.800" r="13.5" fill="url(#gbtng)"/><circle cx="1032.8" cy="45.800" r="13.5" fill="url(#gbtng)"/><circle cx="1072.3" cy="45.800" r="13.5" fill="url(#gbtn)"/><circle cx="1112.2" cy="45.800" r="13.5" fill="url(#gbtn)"/><circle cx="1152" cy="45.800" r="13.5" fill="url(#gbtn)"/><path d="M908.8 41.600h8.400a3.900 3.900 0 0 1 0 7.800h-9a3.900 3.900 0 0 1-3.400-2" fill="none" stroke="#fdfdfd" stroke-width="1.5"/><path d="M905.2 41.600l4.400-3v6z" fill="#fdfdfd"/><path d="M950 41l8.400 4.800-8.400 4.800z" fill="#fdfdfd"/><path d="M988.8 41.400h2.600v8.800h-2.600zM994.600 41.400h2.600v8.800h-2.600z" fill="#fdfdfd"/><rect x="1028.6" y="41.600" width="8.400" height="8.400" fill="#fdfdfd"/><path d="M1071.200 41.200v9.200l-7.600-4.600zM1079.200 41.200v9.200l-7.600-4.600z" fill="#fdfdfd"/><path d="M1105.200 41.200v9.200l7.600-4.600zM1113.200 41.200v9.200l7.600-4.600z" fill="#fdfdfd"/><circle cx="1152" cy="45.800" r="7.200" fill="none" stroke="#fdfdfd" stroke-width="1.4"/><path d="M1152.300 41v5.200h-4.200" fill="none" stroke="#cfe6f8" stroke-width="1.1"/><text x="5" y="84" font-family="Liberation Sans, sans-serif" font-size="12" fill="#8a8a8a" stroke="#8a8a8a" stroke-width=".25" textLength="18.6" lengthAdjust="spacingAndGlyphs">SMF</text><path d="M33 69v22M138.3 69v22M167.3 69v22M272.4 69v22M353.4 69v22M506.6 69v22M586.6 69v22M641.7 69v22M720 69v22M800 69v22" stroke="#dcdcdc" stroke-width="1"/><rect x="45.6" y="70.200" width="5" height="5" fill="#f6f8fa" stroke="#7d8b96" stroke-width=".5"/><rect x="46.1" y="70.700" width="4" height="1.800" fill="#2a86d6"/><rect x="45.6" y="83.600" width="5" height="5" fill="#f6f8fa" stroke="#7d8b96" stroke-width=".5"/><rect x="46.1" y="86.300" width="4" height="1.800" fill="#2a86d6"/><rect x="38.6" y="77" width="5" height="5" fill="#f6f8fa" stroke="#7d8b96" stroke-width=".5"/><rect x="39.1" y="77.500" width="1.800" height="4" fill="#2a86d6"/><rect x="52.6" y="77" width="5" height="5" fill="#f6f8fa" stroke="#7d8b96" stroke-width=".5"/><rect x="55.3" y="77.500" width="1.800" height="4" fill="#2a86d6"/><rect x="45.400" y="76.800" width="5.400" height="5.400" fill="#f6f8fa" stroke="#7d8b96" stroke-width=".5"/><rect x="46" y="77.400" width="4.200" height="3" fill="#2a86d6"/><rect x="63.6" y="71" width="15.6" height="12.6" rx="1" fill="#fafafa" stroke="#8d8d8d" stroke-width=".8"/><rect x="67.4" y="74.800" width="15.6" height="13" rx="1" fill="url(#gg)" stroke="#7d7d7d" stroke-width=".8"/><rect x="86.6" y="68.200" width="23.6" height="23.2" rx="2" fill="#dbdbdb" stroke="#c6c6c6" stroke-width=".8"/><rect x="111.2" y="68.200" width="24" height="23.2" rx="2" fill="#dbdbdb" stroke="#c6c6c6" stroke-width=".8"/><g fill="none" stroke="#222" stroke-width="1"><path d="M89.600 76.200h13v12.600h-13zM94.600 71.400h13v12.600h-13zM89.600 76.200l5-4.800M102.600 76.200l5-4.800M89.600 88.800l5-4.800M102.600 88.800l5-4.800"/></g><path d="M123.400 70.600h9.800v9.600h-9.800z" fill="#2a8cdc"/><g fill="none" stroke="#222" stroke-width="1"><path d="M114.200 76.400l5.400-5.800h13.600l-5.200 5.800M133.200 70.600v12.600l-5.200 5.600v-12.400M128 76.400h-5"/><path d="M114.200 76.400h9M114.200 76.400v12.400h13.800M119.600 70.600v12.600M119.600 83.200h13.600M114.200 88.800l5.400-5.600" stroke-dasharray="3 1.300" stroke-width=".8"/></g><path d="M143.400 79.600c3.200-4 6.400-5.800 9.400-5.800s6.400 1.800 9.400 5.800c-3 4-6.400 5.800-9.400 5.800s-6.200-1.800-9.400-5.800z" fill="#1d82d4" stroke="#114c86" stroke-width=".8"/><ellipse cx="152.800" cy="79.600" rx="3.700" ry="3.900" fill="#2a8cdc" stroke="#0e3f73" stroke-width="1"/><circle cx="152.800" cy="79.600" r="1.400" fill="#0e3f73"/><path d="M157.400 72.600h4.800M159.800 70.200v4.800" stroke="#333" stroke-width=".8"/><path d="M173.200 84.600h8.800v-9.400h-8.800z" fill="url(#gg)" stroke="#7f7f7f" stroke-width=".6" stroke-linejoin="round"/><path d="M173.200 75.200l4.300 -3.200h8.800l-4.300 3.200z" fill="#cdcdcd" stroke="#7f7f7f" stroke-width=".6" stroke-linejoin="round"/><path d="M182 75.200l4.300 -3.200v9.400l-4.300 3.200z" fill="#8f8f8f" stroke="#7f7f7f" stroke-width=".6" stroke-linejoin="round"/><path d="M182 86.500h6.200v-6.600h-6.200z" fill="url(#gg)" stroke="#7f7f7f" stroke-width=".6" stroke-linejoin="round"/><path d="M182 79.900l3.200 -2.800h6.200l-3.200 2.800z" fill="#cdcdcd" stroke="#7f7f7f" stroke-width=".6" stroke-linejoin="round"/><path d="M188.200 79.900l3.200 -2.800v6.600l-3.200 2.800z" fill="#8f8f8f" stroke="#7f7f7f" stroke-width=".6" stroke-linejoin="round"/><path d="M198 84.600h8.800v-9.400h-8.800z" fill="url(#gg)" stroke="#7f7f7f" stroke-width=".6" stroke-linejoin="round"/><path d="M198 75.200l4.300 -3.200h8.800l-4.300 3.200z" fill="#cdcdcd" stroke="#7f7f7f" stroke-width=".6" stroke-linejoin="round"/><path d="M206.800 75.200l4.300 -3.200v9.400l-4.300 3.200z" fill="#8f8f8f" stroke="#7f7f7f" stroke-width=".6" stroke-linejoin="round"/><path d="M206.800 86.500h6.200v-6.600h-6.200z" fill="url(#gg)" stroke="#7f7f7f" stroke-width=".6" stroke-linejoin="round"/><path d="M206.800 79.900l3.200 -2.800h6.200l-3.200 2.800z" fill="#cdcdcd" stroke="#7f7f7f" stroke-width=".6" stroke-linejoin="round"/><path d="M213 79.900l3.200 -2.800v6.600l-3.200 2.800z" fill="#8f8f8f" stroke="#7f7f7f" stroke-width=".6" stroke-linejoin="round"/><path d="M223.300 75.200h8.900v4.700h6.100v6.100h-6.100v-1.900h-8.900z" fill="url(#gg)" stroke="#7f7f7f" stroke-width=".6" stroke-linejoin="round"/><path d="M223.300 75.200l4.300-3.200h8.900l-4.300 3.200z" fill="#cdcdcd" stroke="#7f7f7f" stroke-width=".6" stroke-linejoin="round"/><path d="M232.200 75.200l4.300-3.200v4.900l-2.100 2.800h-2.200z" fill="#8f8f8f" stroke="#7f7f7f" stroke-width=".6" stroke-linejoin="round"/><path d="M232.200 79.900l3.200-2.800h6.100l-3.200 2.800z" fill="#cdcdcd" stroke="#7f7f7f" stroke-width=".6" stroke-linejoin="round"/><path d="M238.300 79.900l3.200-2.800v6.100l-3.200 2.800z" fill="#8f8f8f" stroke="#7f7f7f" stroke-width=".6" stroke-linejoin="round"/><path d="M248.300 75.200h8.900v4.700h6.100v6.100h-6.100v-1.900h-8.900z" fill="url(#gg)" stroke="#7f7f7f" stroke-width=".6" stroke-linejoin="round"/><path d="M248.300 75.200l4.300-3.200h8.900l-4.300 3.200z" fill="#cdcdcd" stroke="#7f7f7f" stroke-width=".6" stroke-linejoin="round"/><path d="M257.200 75.200l4.300-3.200v4.900l-2.100 2.800h-2.200z" fill="#8f8f8f" stroke="#7f7f7f" stroke-width=".6" stroke-linejoin="round"/><path d="M257.200 79.900l3.200-2.800h6.100l-3.200 2.800z" fill="#cdcdcd" stroke="#7f7f7f" stroke-width=".6" stroke-linejoin="round"/><path d="M263.300 79.900l3.200-2.800v6.100l-3.200 2.800z" fill="#8f8f8f" stroke="#7f7f7f" stroke-width=".6" stroke-linejoin="round"/><path d="M186.600 72.900h4.800M189 70.500v4.800M262.200 70.400l3.800 3.800M266 70.400l-3.800 3.800" stroke="#8a8a8a" stroke-width=".8"/><path d="M213 87.600h3.400" stroke="#8a8a8a" stroke-width=".8"/><g transform="translate(286.500 79.400) rotate(-42.500)"><rect x="-12.600" y="-1.450" width="25.200" height="2.900" rx="1.400" fill="#1f84d6" stroke="#0c3a66" stroke-width=".8"/><circle cx="-11.200" cy="0" r="1.900" fill="#1f84d6" stroke="#0c3a66" stroke-width=".7"/><rect x="-7.400" y="-4.300" width="14.800" height="8.600" rx="1.600" fill="url(#gb2)" stroke="#0c3a66" stroke-width=".9"/><path d="M3.600 -4.300v8.600M5.400 -4.300v8.600M-5.400 -4.300v8.600" stroke="#0c3a66" stroke-width=".6"/></g><path d="M281 73.400c4.600-.6 10.400 4.600 11.200 10.600" fill="none" stroke="#333" stroke-width=".6"/><path d="M282.600 72.200l-2 1.200 1.600 1.600M290.800 82.800l1.400 1.800 1.200-1.800" fill="none" stroke="#333" stroke-width=".7"/><g transform="translate(312.300 79.800) rotate(-42.500)"><rect x="-12.600" y="-1.450" width="25.200" height="2.900" rx="1.400" fill="#1f84d6" stroke="#0c3a66" stroke-width=".8"/><circle cx="-11.200" cy="0" r="1.900" fill="#1f84d6" stroke="#0c3a66" stroke-width=".7"/><rect x="-7.400" y="-4.300" width="14.800" height="8.600" rx="1.600" fill="url(#gb2)" stroke="#0c3a66" stroke-width=".9"/><path d="M3.600 -4.300v8.600M5.400 -4.300v8.600M-5.400 -4.300v8.600" stroke="#0c3a66" stroke-width=".6"/></g><path d="M302.600 78.400L311.400 70.600" stroke="#333" stroke-width=".6"/><path d="M302.400 76.600l0 2 2 0M311.600 72.600l0-2.200-2.200 0" fill="none" stroke="#333" stroke-width=".7"/><g transform="translate(336.700 79.300) rotate(-42.500)"><rect x="-12.600" y="-1.450" width="25.200" height="2.900" rx="1.400" fill="#1f84d6" stroke="#0c3a66" stroke-width=".8"/><circle cx="-11.200" cy="0" r="1.900" fill="#1f84d6" stroke="#0c3a66" stroke-width=".7"/><circle cx="0" cy="0" r="6.800" fill="url(#gb2)" stroke="#0c3a66" stroke-width=".9"/><path d="M1.500 -6.600a3 6.800 0 0 1 0 13.200" fill="none" stroke="#0c3a66" stroke-width=".6"/></g><path d="M329 86.800l2.600 2.200M344.400 70.600l2 1.800M330 72.400l1.600-1.400M345.600 87.600l-1.800 1.200" stroke="#333" stroke-width=".7"/><rect x="357" y="70.400" width="18.600" height="18.400" rx=".8" fill="url(#gb2)" stroke="#135a9c" stroke-width=".9"/><circle cx="391.300" cy="79.600" r="9.700" fill="url(#gb2)" stroke="#135a9c" stroke-width=".9"/><path d="M406.800 75h13.600v13.800h-13.600z" fill="url(#gb2)" stroke="#0f3f70" stroke-width=".9"/><path d="M406.800 75l5-4.600h13.600l-5 4.600z" fill="#6cb8ec" stroke="#0f3f70" stroke-width=".9"/><path d="M420.400 75l5-4.600v13.600l-5 4.800z" fill="#1a6fb8" stroke="#0f3f70" stroke-width=".9"/><path d="M411.800 70.400v13.600h13.600M411.800 84l-5 4.800" fill="none" stroke="#0f3f70" stroke-width=".5" stroke-dasharray="1.500 1"/><circle cx="441.600" cy="79.600" r="9.800" fill="url(#gb2)" stroke="#135a9c" stroke-width=".9"/><ellipse cx="441.600" cy="79.600" rx="9.800" ry="3.200" fill="none" stroke="#0f3f70" stroke-width=".6" stroke-dasharray="1.600 1"/><path d="M459 73.400v13c0 1.600 3.600 2.800 7.800 2.800s7.800-1.200 7.800-2.800v-13z" fill="url(#gb2)" stroke="#135a9c" stroke-width=".9"/><ellipse cx="466.800" cy="73.400" rx="7.800" ry="2.800" fill="#6cb8ec" stroke="#135a9c" stroke-width=".9"/><path d="M459 85.400c1.500-1.800 4-2.400 7.800-2.400s6.300.6 7.800 2.400" fill="none" stroke="#0f3f70" stroke-width=".5" stroke-dasharray="1.500 1"/><path d="M485.800 80h12.400M492 73.800v12.400" stroke="#555" stroke-width="1"/><rect x="512.8" y="71.400" width="15.600" height="9.400" fill="url(#gb2)" stroke="#33424f" stroke-width=".8"/><path d="M510.800 81.600h19.600" stroke="#3a4048" stroke-width="1.600"/><path d="M516.200 82.400v4.600M520.600 82.400v4.600M525 82.400v4.600" stroke="#4a4a4a" stroke-width="1"/><text x="520.6" y="79.400" font-family="Liberation Sans, sans-serif" font-weight="bold" font-size="7" text-anchor="middle" fill="#26343f">D</text><rect x="538.4" y="71.400" width="15.600" height="9.400" fill="url(#gb2)" stroke="#33424f" stroke-width=".8"/><path d="M536.400 81.600h19.600" stroke="#3a4048" stroke-width="1.600"/><path d="M541.800 82.400v4.600M546.200 82.400v4.600M550.600 82.400v4.600" stroke="#4a4a4a" stroke-width="1"/><text x="546.2" y="79.400" font-family="Liberation Sans, sans-serif" font-weight="bold" font-size="7" text-anchor="middle" fill="#26343f">F</text><rect x="563.8" y="71.400" width="15.600" height="9.400" fill="url(#gb2)" stroke="#33424f" stroke-width=".8"/><path d="M561.800 81.600h19.600" stroke="#3a4048" stroke-width="1.600"/><path d="M567.200 82.400v4.600M571.600 82.400v4.600M576 82.400v4.600" stroke="#4a4a4a" stroke-width="1"/><text x="571.6" y="79.400" font-family="Liberation Sans, sans-serif" font-weight="bold" font-size="7" text-anchor="middle" fill="#26343f">U</text><path d="M593.600 85.800l14-12.600" stroke="#333" stroke-width="1"/><rect x="-2" y="-2" width="4" height="4" transform="translate(593 86.200) rotate(45)" fill="#2a8cdc" stroke="#14508c" stroke-width=".7"/><rect x="-2" y="-2" width="4" height="4" transform="translate(608 72.600) rotate(45)" fill="#2a8cdc" stroke="#14508c" stroke-width=".7"/><path d="M618.200 83.600a7.700 8.600 0 0 1 15.400 0" fill="none" stroke="#333" stroke-width="1.100"/><rect x="616" y="82.400" width="4.200" height="4" fill="#2a8cdc" stroke="#14508c" stroke-width=".6"/><rect x="631.400" y="82.400" width="4.200" height="4" fill="#2a8cdc" stroke="#14508c" stroke-width=".6"/><rect x="645.8" y="70.600" width="18.200" height="18" rx="1" fill="url(#gg)" stroke="#848484" stroke-width=".8"/><path d="M645.800 73.600h18.200" stroke="#858585" stroke-width=".8"/><path d="M647.300 72h10" stroke="#9a9a9a" stroke-width=".6"/><path d="M648.800 77.600l3.800 3.400-3.800 3.400M654.200 85h3.600" fill="none" stroke="#777" stroke-width="1"/><rect x="670.8" y="70.600" width="18.200" height="18" rx="1" fill="url(#gg)" stroke="#848484" stroke-width=".8"/><path d="M670.800 73.600h18.200" stroke="#858585" stroke-width=".8"/><path d="M672.300 72h10" stroke="#9a9a9a" stroke-width=".6"/><path d="M674.200 77l4.600 3.800-4.600 3.800" fill="none" stroke="#777" stroke-width="1"/><rect x="696" y="70.600" width="18.200" height="18" rx="1" fill="url(#gg)" stroke="#848484" stroke-width=".8"/><path d="M696 73.600h18.200" stroke="#858585" stroke-width=".8"/><path d="M697.500 72h10" stroke="#9a9a9a" stroke-width=".6"/><path d="M700.800 85.400l8.600-8" fill="none" stroke="#777" stroke-width="1"/><circle cx="734.600" cy="79.700" r="9.600" fill="none" stroke="#9a9a9a" stroke-width=".7"/><circle cx="734.600" cy="79.700" r="7.800" fill="url(#gg)" stroke="#858585" stroke-width=".6"/><rect x="749.400" y="70" width="11.600" height="11.600" fill="#8d8d8d" stroke="#444" stroke-width=".9"/><rect x="751.600" y="72.200" width="7.200" height="7.200" fill="#2a8cdc"/><circle cx="755.200" cy="75.800" r="2.500" fill="#f4f4f4" stroke="#333" stroke-width=".6"/><rect x="757.600" y="77.800" width="11.600" height="11.600" fill="#ececec" stroke="#444" stroke-width=".9"/><rect x="-2.500" y="-2.500" width="5" height="5" transform="translate(763.400 83.600) rotate(45)" fill="#2a8cdc" stroke="#333" stroke-width=".6"/><path d="M784.600 75.600v4.400M777.400 85v-5h14.400v5" fill="none" stroke="#333" stroke-width="1"/><rect x="782.200" y="70.400" width="4.800" height="4.800" fill="#2a8cdc" stroke="#14508c" stroke-width=".7"/><circle cx="777.400" cy="86.400" r="2.500" fill="#2a8cdc" stroke="#14508c" stroke-width=".7"/><circle cx="791.800" cy="86.400" r="2.500" fill="#2a8cdc" stroke="#14508c" stroke-width=".7"/><path d="M806.600 71.600v14.800h16M806.600 86.400l11.200-11" fill="none" stroke="#8a8a8a" stroke-width=".8"/><path d="M806.600 70.400l1.400 2.400h-2.800zM823.400 86.400l-2.400 1.400v-2.800zM818.400 74.800l-.6 2.400-1.800-1.800z" fill="#8a8a8a"/><text x="814" y="85.600" font-family="Liberation Sans, sans-serif" font-size="6.400" fill="#9a9a9a">M</text><path d="M831.600 71.600v14.800h16M831.600 86.400l11.200-11" fill="none" stroke="#8a8a8a" stroke-width=".8"/><path d="M831.600 70.400l1.400 2.400h-2.800zM848.400 86.400l-2.400 1.400v-2.800zM843.400 74.800l-.6 2.400-1.800-1.800z" fill="#8a8a8a"/><text x="839" y="85.600" font-family="Liberation Sans, sans-serif" font-size="6.400" fill="#9a9a9a">S</text><rect x="1147.200" y="102" width="24.200" height="90.400" rx="2.500" fill="#dedede" stroke="#d0d0d0" stroke-width=".8"/><text x="14.600" y="141.500" text-anchor="middle" font-family="'Liberation Sans','Noto Sans CJK SC',sans-serif" font-size="9.300" fill="#2a2a2a">组</text><text x="14.600" y="152.500" text-anchor="middle" font-family="'Liberation Sans','Noto Sans CJK SC',sans-serif" font-size="9.300" fill="#2a2a2a">件</text><path d="M13 105.200h3.600M13 181.600h3.600" stroke="#555" stroke-width="1"/><path d="M6.300 191h17.700" stroke="#e4e4e4" stroke-width="1"/><text x="14.600" y="237.600" text-anchor="middle" font-family="'Liberation Sans','Noto Sans CJK SC',sans-serif" font-size="9.300" fill="#2a2a2a">建</text><text x="14.600" y="248.500" text-anchor="middle" font-family="'Liberation Sans','Noto Sans CJK SC',sans-serif" font-size="9.300" fill="#2a2a2a">模</text><path d="M13 201.200h3.600M13 277.600h3.600" stroke="#555" stroke-width="1"/><path d="M6.300 287h17.700" stroke="#e4e4e4" stroke-width="1"/><text x="14.600" y="333.500" text-anchor="middle" font-family="'Liberation Sans','Noto Sans CJK SC',sans-serif" font-size="9.300" fill="#2a2a2a">编</text><text x="14.600" y="344.500" text-anchor="middle" font-family="'Liberation Sans','Noto Sans CJK SC',sans-serif" font-size="9.300" fill="#2a2a2a">程</text><path d="M13 297.200h3.600M13 373.600h3.600" stroke="#555" stroke-width="1"/><path d="M6.300 383h17.700" stroke="#e4e4e4" stroke-width="1"/><text x="1159.200" y="146.200" text-anchor="middle" font-family="'Liberation Sans','Noto Sans CJK SC',sans-serif" font-size="9.300" fill="#2a2a2a">示</text><text x="1159.200" y="156.900" text-anchor="middle" font-family="'Liberation Sans','Noto Sans CJK SC',sans-serif" font-size="9.300" fill="#2a2a2a">教</text><path d="M1157.200 109h3.800M1157.200 186h3.800" stroke="#555" stroke-width="1"/><path d="M1151 99.400h17" stroke="#e2e2e2" stroke-width="1"/><text x="1159.200" y="242" text-anchor="middle" font-family="'Liberation Sans','Noto Sans CJK SC',sans-serif" font-size="9.300" fill="#2a2a2a">信</text><text x="1159.200" y="253" text-anchor="middle" font-family="'Liberation Sans','Noto Sans CJK SC',sans-serif" font-size="9.300" fill="#2a2a2a">号</text><path d="M1157.200 205h3.800M1157.200 282h3.800" stroke="#555" stroke-width="1"/><path d="M1151 195.400h17" stroke="#e2e2e2" stroke-width="1"/><text x="1159.200" y="338" text-anchor="middle" font-family="'Liberation Sans','Noto Sans CJK SC',sans-serif" font-size="9.300" fill="#2a2a2a">统</text><text x="1159.200" y="349" text-anchor="middle" font-family="'Liberation Sans','Noto Sans CJK SC',sans-serif" font-size="9.300" fill="#2a2a2a">计</text><path d="M1157.200 301h3.800M1157.200 378h3.800" stroke="#555" stroke-width="1"/><path d="M1151 291.400h17" stroke="#e2e2e2" stroke-width="1"/><path d="M1151 387.400h17" stroke="#e2e2e2" stroke-width="1"/><text x="33.200" y="622" font-family="'Liberation Serif','Noto Serif CJK SC',serif" font-size="7.900" fill="#111">正在加载场景<tspan dx="0.800" letter-spacing="2">...</tspan></text><text x="33.200" y="630.600" font-family="'Liberation Serif','Noto Serif CJK SC',serif" font-size="7.900" fill="#111">场景已打开</text></svg>
</body></html>
